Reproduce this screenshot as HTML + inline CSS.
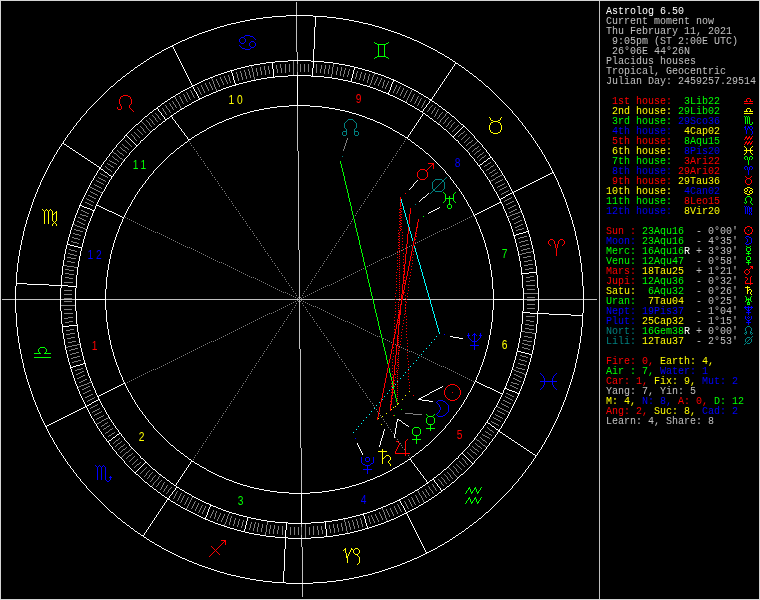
<!DOCTYPE html>
<html><head><meta charset="utf-8"><title>Astrolog 6.50</title>
<style>
html,body{margin:0;padding:0;background:#000;}
body{width:760px;height:600px;position:relative;overflow:hidden;}
#chart{position:absolute;left:0;top:0;will-change:transform;}
#chart path{fill:none;stroke-width:1;shape-rendering:crispEdges;}
#chart text{font-family:"Liberation Sans",sans-serif;font-size:12.5px;text-anchor:middle;letter-spacing:3.4px;}
#side{will-change:transform;position:absolute;left:606px;top:7px;font-family:"Liberation Mono",monospace;font-size:10px;line-height:10px;color:#c0c0c0;}
#side .l{height:10px;white-space:pre;}
#frame{position:absolute;left:0;top:0;width:758px;height:598px;border:1px solid #d4d4d4;pointer-events:none;}
</style></head><body>
<svg id="chart" width="760" height="600" viewBox="0 0 760 600">
<path stroke="#ffffff" d="M286 15.5h27M272 16.5h14M313 16.5h14M263 17.5h9M315.5 17v10M327 17.5h9M256 18.5h7M336 18.5h7M250 19.5h6M343 19.5h6M245 20.5h5M349 20.5h5M240 21.5h5M354 21.5h5M236 22.5h4M359 22.5h4M231 23.5h5M363 23.5h5M227 24.5h4M368 24.5h4M224 25.5h3M372 25.5h3M220 26.5h4M375 26.5h4M217 27.5h3M314.5 27v22M379 27.5h3M214 28.5h3M382 28.5h3M211 29.5h3M385 29.5h3M208 30.5h3M388 30.5h3M205 31.5h3M391 31.5h3M202 32.5h3M394 32.5h3M199 33.5h3M397 33.5h3M197 34.5h2M400 34.5h2M194 35.5h3M402 35.5h3M192 36.5h2M405 36.5h2M189 37.5h3M407 37.5h3M187 38.5h2M410 38.5h2M185 39.5h2M412 39.5h2M182 40.5h3M414 40.5h3M180 41.5h2M417 41.5h2M178 42.5h2M419 42.5h2M176 43.5h2M421 43.5h2M174 44.5h2M423 44.5h2M172 45.5h2M425 45.5h2M170 46.5h3M427 46.5h2M168 47.5h2M173.5 47v2M429 47.5h2M166 48.5h2M431 48.5h2M164 49.5h2M174.5 49v2M313.5 49v19M433 49.5h2M162 50.5h2M435 50.5h2M161 51.5h1M175.5 51v2M437 51.5h1M159 52.5h2M438 52.5h2M157 53.5h2M176.5 53v2M440 53.5h2M155 54.5h2M442 54.5h2M154 55.5h1M177.5 55v2M444 55.5h1M152 56.5h2M445 56.5h2M150 57.5h2M178.5 57v2M447 57.5h2M149 58.5h1M449 58.5h1M147 59.5h2M179.5 59v2M450 59.5h2M146 60.5h1M288 60.5h23M452 60.5h1M144 61.5h2M180.5 61v2M275 61.5h13M311 61.5h2M314 61.5h10M453 61.5h2M143 62.5h1M266 62.5h9M324 62.5h9M455.5 62v2M141 63.5h2M181.5 63v2M260 63.5h6M272.5 63v6M333 63.5h6M456 63.5h2M140 64.5h1M254 64.5h6M339 64.5h6M454.5 64v2M458 64.5h1M138 65.5h2M182.5 65v2M249 65.5h5M345 65.5h5M459 65.5h2M137 66.5h1M245 66.5h4M350 66.5h4M453 66.5h1M461 66.5h1M135 67.5h2M183.5 67v2M241 67.5h4M354 67.5h4M452.5 67v2M462 67.5h2M134 68.5h1M237 68.5h4M312.5 68v9M354.5 68v2M358 68.5h4M464 68.5h1M133 69.5h1M184.5 69v2M234 69.5h3M273.5 69v9M362 69.5h3M451 69.5h1M465 69.5h1M131 70.5h2M230 70.5h4M353.5 70v4M365 70.5h4M450.5 70v2M466 70.5h2M130 71.5h1M185.5 71v2M227 71.5h3M231.5 71v2M369 71.5h3M468 71.5h1M129 72.5h1M224 72.5h3M372 72.5h3M449 72.5h1M469 72.5h1M127 73.5h2M186.5 73v2M221 73.5h3M232.5 73v3M375 73.5h3M448.5 73v2M470 73.5h2M126 74.5h1M218 74.5h3M352.5 74v4M378 74.5h3M472 74.5h1M125 75.5h1M187.5 75v2M215 75.5h3M288 75.5h23M381 75.5h3M447 75.5h1M473 75.5h1M123 76.5h2M213 76.5h2M233.5 76v4M275 76.5h13M297.5 76v30M311 76.5h1M313 76.5h11M384 76.5h2M446.5 76v2M474 76.5h2M122 77.5h1M188.5 77v2M210 77.5h3M267 77.5h6M274 77.5h1M324 77.5h8M386 77.5h3M476 77.5h1M121 78.5h1M208 78.5h2M261 78.5h6M332 78.5h6M351.5 78v4M389 78.5h2M445 78.5h1M477 78.5h1M120 79.5h1M189.5 79v2M205 79.5h3M256 79.5h5M338 79.5h5M391 79.5h3M444.5 79v2M478 79.5h1M118 80.5h2M203 80.5h2M234.5 80v3M251 80.5h5M343 80.5h5M393 80.5h3M479 80.5h2M117 81.5h1M190.5 81v2M201 81.5h2M247 81.5h4M348 81.5h3M393 81.5h1M396 81.5h2M443 81.5h1M481 81.5h1M116 82.5h1M199 82.5h2M243 82.5h4M352 82.5h4M392.5 82v2M398 82.5h2M442.5 82v2M482 82.5h1M115 83.5h1M191.5 83v2M197 83.5h2M235.5 83v3M239 83.5h4M356 83.5h4M400 83.5h2M483 83.5h1M114 84.5h1M195 84.5h2M236 84.5h3M360 84.5h3M391.5 84v3M402 84.5h2M441 84.5h1M484 84.5h1M113 85.5h1M192 85.5h3M232 85.5h3M363 85.5h4M404 85.5h2M440.5 85v2M485 85.5h1M111 86.5h2M191 86.5h2M229 86.5h3M367 86.5h3M406 86.5h2M486 86.5h2M110 87.5h1M189 87.5h2M193.5 87v2M226 87.5h3M370 87.5h3M390.5 87v3M408 87.5h2M439 87.5h1M488 87.5h1M109 88.5h1M187 88.5h2M223 88.5h3M373 88.5h3M410 88.5h2M438.5 88v2M489 88.5h1M108 89.5h1M185 89.5h2M194.5 89v2M221 89.5h2M376 89.5h2M412 89.5h2M490 89.5h1M107 90.5h1M183 90.5h2M218 90.5h3M378 90.5h3M389.5 90v2M414 90.5h2M437 90.5h1M491 90.5h1M106 91.5h1M181 91.5h2M195 91.5h1M216 91.5h2M381 91.5h2M416 91.5h2M436.5 91v2M492 91.5h1M105 92.5h1M180 92.5h1M196.5 92v2M213 92.5h3M383 92.5h3M388.5 92v3M418 92.5h1M493 92.5h1M104 93.5h1M178 93.5h2M211 93.5h2M386 93.5h2M419 93.5h2M435 93.5h1M494 93.5h1M103 94.5h1M176 94.5h2M197.5 94v2M209 94.5h2M389 94.5h1M421 94.5h2M434.5 94v2M495 94.5h1M102 95.5h1M175 95.5h1M206 95.5h3M390 95.5h3M423 95.5h1M496 95.5h1M101 96.5h1M173 96.5h2M198.5 96v2M204 96.5h2M393 96.5h2M424 96.5h2M433 96.5h1M497 96.5h1M100 97.5h1M171 97.5h2M202 97.5h2M395 97.5h2M426 97.5h2M432.5 97v2M498 97.5h1M99 98.5h1M170 98.5h1M199 98.5h3M397 98.5h2M428 98.5h1M499 98.5h1M98 99.5h1M168 99.5h2M198 99.5h2M399 99.5h2M429 99.5h3M500 99.5h1M97 100.5h1M167 100.5h1M196 100.5h2M401 100.5h2M430 100.5h2M501 100.5h1M96 101.5h1M165 101.5h2M194 101.5h2M403 101.5h2M429.5 101v2M432 101.5h2M502 101.5h1M95 102.5h1M164 102.5h1M192 102.5h2M405 102.5h2M434 102.5h1M503 102.5h1M94 103.5h1M162 103.5h2M191 103.5h1M407 103.5h1M428 103.5h1M435 103.5h2M504 103.5h1M93 104.5h1M161 104.5h1M189 104.5h2M408 104.5h2M427 104.5h1M437 104.5h1M505 104.5h1M92 105.5h1M160 105.5h1M187 105.5h2M289 105.5h8M298 105.5h12M410 105.5h2M426.5 105v2M438 105.5h1M506 105.5h1M91 106.5h1M158 106.5h2M185 106.5h2M277 106.5h12M310 106.5h12M412 106.5h2M439 106.5h2M507 106.5h1M90 107.5h1M157.5 107v2M184 107.5h1M270 107.5h7M322 107.5h7M414 107.5h1M425 107.5h1M441 107.5h1M508 107.5h1M89 108.5h1M156 108.5h1M182 108.5h2M264 108.5h6M329 108.5h6M415 108.5h2M424 108.5h1M442 108.5h1M509 108.5h1M88 109.5h1M154 109.5h2M158.5 109v2M180 109.5h2M259 109.5h5M335 109.5h5M417 109.5h2M423.5 109v2M443 109.5h2M510 109.5h1M87 110.5h1M153 110.5h1M179 110.5h1M254 110.5h5M340 110.5h5M419 110.5h1M445 110.5h1M511 110.5h1M86.5 111v2M152 111.5h1M159 111.5h1M177 111.5h2M250 111.5h4M345 111.5h4M420 111.5h3M446 111.5h1M512.5 111v2M150 112.5h2M160 112.5h1M176 112.5h1M247 112.5h3M349 112.5h3M422 112.5h1M447 112.5h2M85 113.5h1M149 113.5h1M161.5 113v2M174 113.5h2M243 113.5h4M352 113.5h4M423 113.5h2M449 113.5h1M513 113.5h1M84 114.5h1M148 114.5h1M173 114.5h1M240 114.5h3M356 114.5h3M422.5 114v2M425 114.5h1M450 114.5h1M514 114.5h1M83 115.5h1M147 115.5h1M162 115.5h1M171 115.5h2M237 115.5h3M359 115.5h3M426 115.5h2M451 115.5h1M515 115.5h1M82 116.5h1M145 116.5h2M163 116.5h1M170 116.5h2M234 116.5h3M362 116.5h3M421 116.5h1M428 116.5h1M452 116.5h2M516 116.5h1M81 117.5h1M144 117.5h1M164.5 117v2M169 117.5h1M172.5 117v2M232 117.5h2M365 117.5h2M420.5 117v2M429 117.5h1M454 117.5h1M517 117.5h1M80.5 118v2M143 118.5h1M167 118.5h2M229 118.5h3M367 118.5h3M430 118.5h2M455 118.5h1M518.5 118v2M142 119.5h1M165 119.5h2M173 119.5h1M226 119.5h3M370 119.5h3M419 119.5h1M432 119.5h1M456 119.5h1M79 120.5h1M141 120.5h1M165 120.5h1M174 120.5h1M224 120.5h2M373 120.5h2M418.5 120v2M433 120.5h1M457 120.5h1M519 120.5h1M78 121.5h1M140 121.5h1M163 121.5h2M175.5 121v2M222 121.5h2M375 121.5h2M434 121.5h2M458 121.5h1M520 121.5h1M77 122.5h1M139 122.5h1M162 122.5h1M219 122.5h3M377 122.5h3M417 122.5h1M436 122.5h1M459 122.5h1M521 122.5h1M76.5 123v2M138 123.5h1M161 123.5h1M176 123.5h1M217 123.5h2M380 123.5h2M416.5 123v2M437 123.5h1M460 123.5h1M522.5 123v2M136 124.5h2M159 124.5h2M177 124.5h1M215 124.5h2M382 124.5h2M438 124.5h2M461 124.5h2M75 125.5h1M135 125.5h1M158 125.5h1M178.5 125v2M213 125.5h2M384 125.5h2M415 125.5h1M440 125.5h1M463.5 125v2M523 125.5h1M74 126.5h1M134 126.5h1M157 126.5h1M211 126.5h2M386 126.5h2M414.5 126v2M441 126.5h1M464 126.5h1M524 126.5h1M73.5 127v2M133 127.5h1M156 127.5h1M179 127.5h1M209 127.5h2M388 127.5h2M442 127.5h1M462 127.5h1M465 127.5h1M525.5 127v2M132 128.5h1M155 128.5h1M180 128.5h1M207 128.5h2M390 128.5h2M413 128.5h1M443 128.5h1M461 128.5h1M466 128.5h1M72 129.5h1M131 129.5h1M153 129.5h2M181.5 129v2M206 129.5h1M392 129.5h1M412.5 129v2M444 129.5h2M460 129.5h1M467 129.5h1M526 129.5h1M71 130.5h1M130 130.5h1M152 130.5h1M204 130.5h2M393 130.5h2M446 130.5h1M459 130.5h1M468 130.5h1M527 130.5h1M70.5 131v2M129 131.5h1M151 131.5h1M182 131.5h1M202 131.5h2M395 131.5h2M411 131.5h1M447 131.5h1M458 131.5h1M469 131.5h1M528.5 131v2M128 132.5h1M150 132.5h1M183 132.5h1M200 132.5h2M397 132.5h2M410.5 132v2M448 132.5h1M457 132.5h1M470 132.5h1M69 133.5h1M127 133.5h1M149 133.5h1M184.5 133v2M199 133.5h1M399 133.5h1M449 133.5h1M456 133.5h1M471 133.5h1M529 133.5h1M68 134.5h1M126.5 134v2M148 134.5h1M197 134.5h2M400 134.5h2M409 134.5h1M450 134.5h1M455 134.5h1M472 134.5h1M530 134.5h1M67.5 135v2M125 135.5h1M147 135.5h1M185 135.5h1M195 135.5h2M402 135.5h2M408.5 135v2M451 135.5h1M454 135.5h1M473 135.5h1M531.5 135v2M124.5 136v2M127 136.5h1M146 136.5h1M186 136.5h1M194 136.5h1M404 136.5h1M452 136.5h2M474.5 136v2M66 137.5h1M128 137.5h1M145 137.5h1M187.5 137v2M192 137.5h2M405 137.5h3M453 137.5h1M532 137.5h1M65.5 138v2M123 138.5h1M129 138.5h1M144 138.5h1M191 138.5h1M407 138.5h1M454 138.5h1M475 138.5h1M533.5 138v2M122 139.5h1M130 139.5h1M143 139.5h1M188 139.5h3M408 139.5h2M455 139.5h1M476 139.5h1M64 140.5h1M121 140.5h1M131 140.5h1M141 140.5h2M188 140.5h1M410 140.5h1M456 140.5h2M477 140.5h1M534 140.5h1M63.5 141v3M120 141.5h1M132 141.5h1M140.5 141v2M187 141.5h1M411 141.5h1M458.5 141v2M478 141.5h1M535.5 141v2M119 142.5h1M133 142.5h1M185 142.5h2M412 142.5h2M479 142.5h1M62 143.5h1M118 143.5h1M134 143.5h1M139 143.5h1M184 143.5h1M414 143.5h1M459 143.5h1M480 143.5h1M536 143.5h1M61.5 144v2M64 144.5h2M117 144.5h1M135 144.5h1M138 144.5h1M183 144.5h1M415 144.5h1M460 144.5h1M481 144.5h1M537.5 144v2M66 145.5h1M116.5 145v2M136 145.5h2M181 145.5h2M416 145.5h2M461 145.5h1M482.5 145v2M60 146.5h1M67 146.5h2M136 146.5h1M180 146.5h1M418 146.5h1M462 146.5h1M538 146.5h1M59.5 147v2M69 147.5h1M115 147.5h1M135 147.5h1M179 147.5h1M419 147.5h1M463 147.5h1M483 147.5h1M539.5 147v2M70 148.5h2M114 148.5h1M134 148.5h1M177 148.5h2M420 148.5h2M464 148.5h1M484 148.5h1M58 149.5h1M72 149.5h1M113 149.5h1M133 149.5h1M176 149.5h1M422 149.5h1M465 149.5h1M485 149.5h1M540 149.5h1M57.5 150v2M73 150.5h2M112.5 150v2M132 150.5h1M175 150.5h1M423 150.5h1M466 150.5h1M486.5 150v2M541.5 150v2M75 151.5h1M131 151.5h1M174 151.5h1M424 151.5h1M467 151.5h1M56.5 152v2M76 152.5h2M111 152.5h1M130 152.5h1M173 152.5h1M425 152.5h1M468 152.5h1M487 152.5h1M542.5 152v2M78 153.5h1M110 153.5h1M129.5 153v2M171 153.5h2M426 153.5h2M469.5 153v2M488 153.5h1M55 154.5h1M79 154.5h2M109.5 154v2M170 154.5h1M428 154.5h1M489.5 154v2M543 154.5h1M54.5 155v2M81 155.5h1M128 155.5h1M169 155.5h1M429 155.5h1M470 155.5h1M544.5 155v2M82 156.5h2M108 156.5h1M127 156.5h1M168 156.5h1M430 156.5h1M471 156.5h1M490.5 156v2M53.5 157v2M84 157.5h1M107 157.5h1M126 157.5h1M167 157.5h1M431 157.5h1M472 157.5h1M491 157.5h1M545.5 157v2M85 158.5h2M106.5 158v2M125 158.5h1M166 158.5h1M432 158.5h1M473 158.5h1M488 158.5h2M492.5 158v2M52.5 159v2M87 159.5h1M124.5 159v2M165 159.5h1M433 159.5h1M474.5 159v2M487 159.5h1M546.5 159v2M88 160.5h2M105 160.5h1M164 160.5h1M434 160.5h1M486 160.5h1M493 160.5h1M51 161.5h1M90 161.5h1M104 161.5h1M123 161.5h1M163 161.5h1M435 161.5h1M475 161.5h1M484 161.5h2M494 161.5h1M547 161.5h1M50.5 162v2M91 162.5h2M103.5 162v2M122 162.5h1M162 162.5h1M436 162.5h1M476 162.5h1M483 162.5h1M495.5 162v2M548.5 162v2M93 163.5h1M121.5 163v2M161 163.5h1M437 163.5h1M477.5 163v2M482 163.5h1M49.5 164v2M94 164.5h2M102 164.5h1M160 164.5h1M438 164.5h1M480 164.5h2M496 164.5h1M549.5 164v2M96 165.5h1M101.5 165v2M120 165.5h1M159 165.5h1M439 165.5h1M478 165.5h2M497.5 165v2M48.5 166v2M97 166.5h2M119 166.5h1M158 166.5h1M440 166.5h1M479 166.5h1M550.5 166v2M99.5 167v3M100.5 167v2M118.5 167v2M157 167.5h1M441 167.5h1M480.5 167v2M498 167.5h1M47.5 168v2M156 168.5h1M442 168.5h1M499.5 168v2M551.5 168v2M101 169.5h2M117 169.5h1M155 169.5h1M443 169.5h1M481 169.5h1M46.5 170v2M98 170.5h1M103 170.5h1M116 170.5h1M154 170.5h1M444 170.5h1M482 170.5h1M500 170.5h1M552.5 170v3M97.5 171v2M104 171.5h1M115.5 171v2M153.5 171v2M445.5 171v2M483.5 171v2M501.5 171v2M45.5 172v2M105 172.5h2M553.5 172v2M96.5 173v2M107 173.5h1M114 173.5h1M152 173.5h1M446 173.5h1M484 173.5h1M502.5 173v2M550 173.5h2M44.5 174v2M108 174.5h1M113.5 174v2M151 174.5h1M447 174.5h1M485.5 174v2M548 174.5h2M554.5 174v2M95 175.5h1M109 175.5h2M150 175.5h1M448 175.5h1M503 175.5h1M546 175.5h2M43.5 176v2M94.5 176v2M111.5 176v3M112 176.5h1M149 176.5h1M449 176.5h1M486 176.5h1M504.5 176v2M544 176.5h2M555.5 176v2M148.5 177v2M450.5 177v2M487.5 177v2M542 177.5h2M42.5 178v2M93.5 178v2M505.5 178v2M540 178.5h2M556.5 178v2M110 179.5h1M147 179.5h1M451 179.5h1M488 179.5h1M538 179.5h2M41.5 180v2M92 180.5h1M109.5 180v2M146 180.5h1M417 180.5h1M452 180.5h1M489.5 180v2M506 180.5h1M536 180.5h2M557.5 180v2M91.5 181v2M145.5 181v2M416 181.5h1M453.5 181v2M507.5 181v2M534 181.5h2M40.5 182v3M108.5 182v2M415 182.5h1M490.5 182v2M532 182.5h2M558.5 182v3M90.5 183v2M144 183.5h1M414 183.5h1M454 183.5h1M508.5 183v2M530 183.5h2M107 184.5h1M143 184.5h1M413.5 184v2M455 184.5h1M491 184.5h1M528 184.5h2M39.5 185v2M89.5 185v2M106.5 185v2M142.5 185v2M456.5 185v2M492.5 185v2M509.5 185v2M526 185.5h2M559.5 185v2M412 186.5h1M524 186.5h2M38.5 187v2M88.5 187v2M105.5 187v2M141 187.5h1M411 187.5h1M457 187.5h1M493.5 187v2M510.5 187v2M522 187.5h2M560.5 187v2M140 188.5h1M410 188.5h1M458 188.5h1M520 188.5h2M37.5 189v3M87.5 189v2M104.5 189v2M139.5 189v2M409 189.5h1M459.5 189v2M494.5 189v2M511.5 189v2M518 189.5h2M561.5 189v3M516 190.5h2M86.5 191v2M103 191.5h1M138 191.5h1M460 191.5h1M495 191.5h1M512.5 191v2M514 191.5h2M36.5 192v2M102.5 192v2M137.5 192v2M461.5 192v2M496.5 192v2M513.5 192v3M562.5 192v2M85.5 193v2M428 193.5h1M510 193.5h2M35.5 194v3M101.5 194v2M136 194.5h1M427 194.5h1M462 194.5h1M497.5 194v2M508 194.5h2M563.5 194v3M84.5 195v2M135.5 195v2M426 195.5h1M463.5 195v2M506 195.5h2M514.5 195v2M100.5 196v2M425 196.5h1M498.5 196v2M505 196.5h1M34.5 197v2M83.5 197v2M134.5 197v2M423 197.5h2M464.5 197v2M503 197.5h2M515.5 197v2M564.5 197v2M99.5 198v2M422 198.5h1M499.5 198v2M501 198.5h2M33.5 199v3M82.5 199v2M133 199.5h1M421 199.5h1M465 199.5h1M500.5 199v4M516.5 199v2M565.5 199v3M98.5 200v2M132.5 200v2M420 200.5h1M466.5 200v2M81.5 201v2M419 201.5h1M517.5 201v2M32.5 202v3M97.5 202v2M131.5 202v2M467.5 202v2M499 202.5h1M501.5 202v2M566.5 202v3M80.5 203v3M497 203.5h2M518.5 203v2M96.5 204v2M130.5 204v2M468.5 204v2M495 204.5h2M502.5 204v2M31.5 205v3M79.5 205v3M81 205.5h1M97 205.5h2M493 205.5h2M519.5 205v3M567.5 205v3M82 206.5h2M95.5 206v3M99 206.5h2M129 206.5h1M469 206.5h1M491 206.5h2M503.5 206v3M84 207.5h3M101 207.5h2M128.5 207v2M439 207.5h1M470.5 207v2M489 207.5h2M30.5 208v3M78.5 208v2M87 208.5h3M103 208.5h2M437 208.5h2M487 208.5h2M520.5 208v2M568.5 208v3M90 209.5h2M94.5 209v2M105 209.5h2M127.5 209v2M435 209.5h2M471.5 209v2M485 209.5h2M504.5 209v2M77.5 210v3M92 210.5h2M107 210.5h2M433 210.5h2M483 210.5h2M521.5 210v3M29.5 211v3M93.5 211v2M109 211.5h3M126.5 211v2M431 211.5h2M472.5 211v2M481 211.5h2M505.5 211v2M569.5 211v3M112 212.5h2M429 212.5h2M479 212.5h2M76.5 213v2M92.5 213v3M114 213.5h2M125.5 213v2M428 213.5h1M473.5 213v2M477 213.5h2M506.5 213v3M522.5 213v2M28.5 214v3M116 214.5h2M475 214.5h2M570.5 214v3M75.5 215v3M118 215.5h2M124.5 215v2M474.5 215v2M523.5 215v3M91.5 216v2M120 216.5h2M507.5 216v2M27.5 217v3M122 217.5h2M475.5 217v2M571.5 217v3M74.5 218v3M90.5 218v3M123 218.5h1M508.5 218v3M524.5 218v3M122.5 219v3M476.5 219v3M26.5 220v4M572.5 220v4M73.5 221v3M89.5 221v2M509.5 221v2M525.5 221v3M121.5 222v2M477.5 222v2M88.5 223v3M510.5 223v3M25.5 224v3M72.5 224v3M120.5 224v2M478.5 224v2M526.5 224v3M573.5 224v3M87.5 226v3M119.5 226v3M479.5 226v3M511.5 226v3M24.5 227v4M71.5 227v3M527.5 227v3M574.5 227v4M86.5 229v3M118.5 229v3M480.5 229v3M512.5 229v3M70.5 230v4M528.5 230v4M23.5 231v5M526 231.5h2M575.5 231v5M85.5 232v4M117.5 232v2M481.5 232v2M513.5 232v4M523 232.5h3M519 233.5h4M69.5 234v3M116.5 234v3M482.5 234v3M516 234.5h3M529.5 234v3M514.5 235v4M515 235.5h1M22.5 236v4M84.5 236v3M576.5 236v4M68.5 237v4M115.5 237v3M483.5 237v3M530.5 237v4M83.5 239v4M515.5 239v4M21.5 240v5M114.5 240v3M484.5 240v3M577.5 240v5M67.5 241v4M531.5 241v4M82.5 243v4M113.5 243v4M485.5 243v4M516.5 243v4M68 244.5h2M20.5 245v5M66.5 245v4M70 245.5h4M532.5 245v4M578.5 245v5M74 246.5h4M78 247.5h4M112.5 247v3M486.5 247v3M517.5 247v4M81.5 248v3M65.5 249v5M533.5 249v5M19.5 250v6M111.5 250v4M487.5 250v4M579.5 250v6M80.5 251v5M518.5 251v5M64.5 254v6M110.5 254v5M488.5 254v5M534.5 254v6M18.5 256v7M79.5 256v5M519.5 256v5M580.5 256v7M109.5 259v5M489.5 259v5M63.5 260v6M535.5 260v6M78.5 261v6M520.5 261v6M17.5 263v9M581.5 263v9M108.5 264v6M490.5 264v6M62.5 266v9M536.5 266v9M77.5 267v8M521.5 267v8M107.5 270v7M491.5 270v7M16.5 272v14M529 272.5h7M582.5 272v14M522 273.5h7M61.5 275v13M76.5 275v13M522.5 275v13M537.5 275v13M106.5 277v12M492.5 277v12M17 283.5h10M27 284.5h22M49 285.5h12M62 285.5h6M15.5 286v27M68 286.5h8M583.5 286v27M60.5 288v23M75.5 288v23M523.5 288v23M538.5 288v23M105.5 289v21M493.5 289v21M76 299.5h29M494 299.5h29M106.5 310v12M492.5 310v12M61.5 311v13M76.5 311v13M522.5 311v13M537.5 311v13M523 312.5h7M16.5 313v14M530 313.5h7M538 313.5h11M582.5 313v14M549 314.5h22M571 315.5h11M107.5 322v7M491.5 322v7M62.5 324v9M77.5 324v8M521.5 324v8M536.5 324v9M69 325.5h8M63 326.5h6M17.5 327v9M581.5 327v9M108.5 329v6M490.5 329v6M78.5 332v6M520.5 332v6M63.5 333v6M535.5 333v6M109.5 335v5M489.5 335v5M18.5 336v7M450 336.5h3M580.5 336v7M453 337.5h6M79.5 338v5M459 338.5h4M519.5 338v5M64.5 339v6M534.5 339v6M110.5 340v5M488.5 340v5M19.5 343v6M80.5 343v5M518.5 343v5M579.5 343v6M65.5 345v5M111.5 345v4M487.5 345v4M533.5 345v5M81.5 348v4M517.5 348v4M20.5 349v5M112.5 349v3M486.5 349v3M578.5 349v5M66.5 350v4M532.5 350v4M518 351.5h3M82.5 352v4M113.5 352v4M485.5 352v4M516.5 352v4M521 352.5h4M525 353.5h4M21.5 354v5M67.5 354v4M529 354.5h3M577.5 354v5M531.5 355v3M83.5 356v4M114.5 356v3M484.5 356v3M515.5 356v4M68.5 358v4M530.5 358v4M22.5 359v4M115.5 359v3M483.5 359v3M576.5 359v4M84.5 360v4M514.5 360v3M69.5 362v3M116.5 362v3M482.5 362v3M529.5 362v3M23.5 363v5M83 363.5h1M85.5 363v4M513.5 363v4M575.5 363v5M80 364.5h3M70.5 365v4M76 365.5h4M117.5 365v2M481.5 365v2M528.5 365v4M73 366.5h3M71 367.5h2M86.5 367v3M118.5 367v3M480.5 367v3M512.5 367v3M24.5 368v4M574.5 368v4M71.5 369v3M527.5 369v3M87.5 370v3M119.5 370v3M479.5 370v3M511.5 370v3M25.5 372v3M72.5 372v3M526.5 372v3M573.5 372v3M88.5 373v3M120.5 373v2M478.5 373v2M510.5 373v3M26.5 375v4M73.5 375v3M121.5 375v2M477.5 375v2M525.5 375v3M572.5 375v4M89.5 376v2M509.5 376v2M122.5 377v3M476.5 377v3M74.5 378v3M90.5 378v3M508.5 378v3M524.5 378v3M27.5 379v3M571.5 379v3M123.5 380v2M475.5 380v2M75.5 381v3M91.5 381v2M476 381.5h1M507.5 381v2M523.5 381v3M28.5 382v3M124.5 382v2M474.5 382v2M477 382.5h2M570.5 382v3M92.5 383v3M123 383.5h1M479 383.5h2M506.5 383v3M76.5 384v2M121 384.5h2M125.5 384v2M473.5 384v2M481 384.5h2M522.5 384v2M29.5 385v3M119 385.5h2M483 385.5h2M569.5 385v3M77.5 386v3M93.5 386v2M117 386.5h2M126.5 386v2M442 386.5h1M472.5 386v2M485 386.5h2M505.5 386v3M521.5 386v3M115 387.5h2M440 387.5h2M487 387.5h3M30.5 388v3M94.5 388v2M113 388.5h2M127.5 388v2M438 388.5h2M471.5 388v2M490 388.5h2M504.5 388v2M506 388.5h1M568.5 388v3M78.5 389v2M111 389.5h2M436 389.5h2M492 389.5h2M507 389.5h2M520.5 389v2M95.5 390v3M109 390.5h2M128.5 390v2M434 390.5h2M470.5 390v2M494 390.5h2M503.5 390v3M509 390.5h3M31.5 391v3M79.5 391v3M107 391.5h2M432 391.5h2M496 391.5h2M512 391.5h3M519.5 391v3M567.5 391v3M105 392.5h2M129 392.5h1M430 392.5h2M469 392.5h1M498 392.5h2M515 392.5h2M96.5 393v2M103 393.5h2M130.5 393v2M429 393.5h1M468.5 393v2M500 393.5h3M517 393.5h2M32.5 394v3M80.5 394v2M101 394.5h2M427 394.5h2M502 394.5h1M518.5 394v2M566.5 394v3M97.5 395v2M99 395.5h2M131.5 395v2M425 395.5h2M467.5 395v2M501.5 395v2M81.5 396v2M98.5 396v4M423 396.5h2M517.5 396v2M33.5 397v3M132.5 397v2M421 397.5h2M466.5 397v2M500.5 397v2M565.5 397v3M82.5 398v2M419 398.5h2M516.5 398v2M99.5 399v2M133 399.5h1M418 399.5h4M465 399.5h1M499.5 399v2M34.5 400v2M83.5 400v2M96 400.5h2M134.5 400v2M422 400.5h7M464.5 400v2M515.5 400v2M564.5 400v2M94 401.5h2M100.5 401v2M429 401.5h4M498.5 401v2M35.5 402v3M84.5 402v2M92 402.5h2M135.5 402v2M463.5 402v2M514.5 402v2M563.5 402v3M91 403.5h1M101.5 403v2M497.5 403v2M85.5 404v3M89 404.5h2M136 404.5h1M462 404.5h1M513.5 404v2M36.5 405v2M87 405.5h2M102.5 405v2M137.5 405v2M461.5 405v2M496.5 405v2M562.5 405v2M86.5 406v2M512.5 406v2M37.5 407v3M83 407.5h2M103 407.5h1M138 407.5h1M460 407.5h1M495 407.5h1M561.5 407v3M81 408.5h2M87.5 408v2M104.5 408v2M139.5 408v2M459.5 408v2M494.5 408v2M511.5 408v2M79 409.5h2M38.5 410v2M77 410.5h2M88.5 410v2M105.5 410v2M140 410.5h1M458 410.5h1M493.5 410v2M510.5 410v2M560.5 410v2M75 411.5h2M141 411.5h1M457 411.5h1M39.5 412v2M73 412.5h2M89.5 412v2M106.5 412v2M142.5 412v2M456.5 412v2M492.5 412v2M509.5 412v2M559.5 412v2M71 413.5h2M40.5 414v3M69 414.5h2M90.5 414v2M107 414.5h1M143 414.5h1M455 414.5h1M491 414.5h1M508.5 414v2M558.5 414v3M67 415.5h2M108.5 415v2M144 415.5h1M454 415.5h1M490.5 415v2M65 416.5h2M91.5 416v2M145.5 416v2M453.5 416v2M507.5 416v2M41.5 417v2M63 417.5h2M109.5 417v2M489.5 417v2M557.5 417v2M61 418.5h2M92 418.5h1M146 418.5h1M452 418.5h1M506 418.5h1M42.5 419v2M59 419.5h2M93.5 419v2M110 419.5h1M147 419.5h1M397.5 419v3M398 419.5h1M451 419.5h1M488 419.5h1M505.5 419v2M556.5 419v2M57 420.5h2M111.5 420v2M148.5 420v2M399 420.5h2M450.5 420v2M487.5 420v3M43.5 421v2M55 421.5h2M94.5 421v2M401 421.5h1M504.5 421v2M555.5 421v2M53 422.5h2M112 422.5h1M149 422.5h1M396.5 422v6M402 422.5h1M449 422.5h1M486 422.5h1M44.5 423v2M51 423.5h2M95 423.5h1M113.5 423v2M150 423.5h1M403 423.5h2M448 423.5h1M485.5 423v2M488 423.5h2M503 423.5h1M554.5 423v2M49 424.5h2M96.5 424v2M151 424.5h1M405 424.5h1M447 424.5h1M490 424.5h1M502.5 424v2M45.5 425v2M47 425.5h2M114 425.5h1M152 425.5h1M406 425.5h2M446 425.5h1M484 425.5h1M491 425.5h1M553.5 425v2M46.5 426v3M97.5 426v2M115.5 426v2M153.5 426v2M408 426.5h1M445.5 426v2M483.5 426v2M492 426.5h2M501.5 426v2M494 427.5h1M552.5 427v2M98 428.5h1M116 428.5h1M154 428.5h1M395.5 428v6M444 428.5h1M482 428.5h1M495 428.5h1M500 428.5h1M47.5 429v2M99.5 429v2M117 429.5h1M155 429.5h1M384.5 429v2M443 429.5h1M481 429.5h1M496 429.5h2M499.5 429v3M551.5 429v2M118.5 430v2M156 430.5h1M442 430.5h1M480.5 430v2M498.5 430v2M48.5 431v2M100 431.5h1M157 431.5h1M383.5 431v4M441 431.5h1M550.5 431v2M101.5 432v2M119.5 432v2M158 432.5h1M440 432.5h1M479 432.5h1M497.5 432v2M500 432.5h2M49.5 433v2M120 433.5h1M159 433.5h1M439 433.5h1M478 433.5h1M502 433.5h1M549.5 433v2M102 434.5h1M117 434.5h2M121.5 434v2M160 434.5h1M394.5 434v4M438 434.5h1M477.5 434v2M496 434.5h1M503 434.5h2M50.5 435v2M103.5 435v2M116 435.5h1M161 435.5h1M382.5 435v3M437 435.5h1M495.5 435v2M505 435.5h1M548.5 435v2M115 436.5h1M122 436.5h1M162 436.5h1M436 436.5h1M476 436.5h1M506 436.5h2M51 437.5h1M104 437.5h1M113 437.5h2M123 437.5h1M163 437.5h1M435 437.5h1M475 437.5h1M494 437.5h1M508 437.5h1M547 437.5h1M52.5 438v2M105 438.5h1M112 438.5h1M124.5 438v2M164 438.5h1M381.5 438v3M434 438.5h1M474.5 438v2M493 438.5h1M509 438.5h2M546.5 438v2M106.5 439v2M111 439.5h1M165 439.5h1M433 439.5h1M492.5 439v2M511 439.5h1M53.5 440v2M109 440.5h2M125 440.5h1M166 440.5h1M432 440.5h1M473 440.5h1M512 440.5h2M545.5 440v2M107 441.5h2M126 441.5h1M167 441.5h1M380.5 441v4M431 441.5h1M472 441.5h1M491 441.5h1M514 441.5h1M54.5 442v2M108 442.5h1M127 442.5h1M168 442.5h1M430 442.5h1M471 442.5h1M490 442.5h1M515 442.5h2M544.5 442v2M109.5 443v2M128 443.5h1M169 443.5h1M357.5 443v2M429 443.5h1M470 443.5h1M489.5 443v2M517 443.5h1M55 444.5h1M129.5 444v2M170 444.5h1M428 444.5h1M469.5 444v2M518 444.5h2M543 444.5h1M56.5 445v2M110 445.5h1M171 445.5h2M358.5 445v2M379.5 445v2M426 445.5h2M488 445.5h1M520 445.5h1M542.5 445v2M111 446.5h1M130 446.5h1M173 446.5h1M425 446.5h1M468 446.5h1M487 446.5h1M521 446.5h2M57.5 447v2M112.5 447v2M131 447.5h1M174 447.5h1M359.5 447v2M424 447.5h1M467 447.5h1M486.5 447v2M523 447.5h1M541.5 447v2M132 448.5h1M175 448.5h1M423 448.5h1M466 448.5h1M524 448.5h2M58 449.5h1M113 449.5h1M133 449.5h1M176 449.5h1M360.5 449v2M422 449.5h1M465 449.5h1M485 449.5h1M526 449.5h1M540 449.5h1M59.5 450v2M114 450.5h1M134 450.5h1M177 450.5h2M420 450.5h2M464 450.5h1M484 450.5h1M527 450.5h2M539.5 450v2M115 451.5h1M135 451.5h1M179 451.5h1M361.5 451v2M419 451.5h1M463 451.5h1M483 451.5h1M529 451.5h1M60 452.5h1M116.5 452v2M136 452.5h1M180 452.5h1M418 452.5h1M462.5 452v2M482.5 452v2M530 452.5h2M538 452.5h1M61.5 453v2M137 453.5h1M181 453.5h2M362.5 453v2M416 453.5h2M461 453.5h1M532 453.5h1M537.5 453v2M117 454.5h1M138 454.5h1M183 454.5h1M415 454.5h1M460 454.5h1M463 454.5h1M481 454.5h1M533 454.5h2M62 455.5h1M118 455.5h1M139 455.5h1M184 455.5h1M414 455.5h1M459 455.5h1M464 455.5h1M480 455.5h1M535.5 455v3M536 455.5h1M63.5 456v2M119 456.5h1M140.5 456v2M185 456.5h2M412 456.5h2M458.5 456v2M465 456.5h1M479 456.5h1M120 457.5h1M187 457.5h1M411 457.5h1M466 457.5h1M478 457.5h1M64 458.5h1M121 458.5h1M141 458.5h2M188 458.5h1M410.5 458v2M456 458.5h2M467 458.5h1M477 458.5h1M534 458.5h1M65.5 459v2M122 459.5h1M143 459.5h1M189 459.5h2M408 459.5h2M455 459.5h1M468 459.5h1M476 459.5h1M533.5 459v2M123 460.5h1M144 460.5h1M191.5 460v2M407 460.5h1M411.5 460v2M454 460.5h1M469 460.5h1M475 460.5h1M66 461.5h1M124.5 461v2M145.5 461v2M192 461.5h2M405 461.5h2M453 461.5h1M470 461.5h1M474.5 461v2M532 461.5h1M67.5 462v2M146 462.5h1M190.5 462v2M194 462.5h1M404 462.5h1M412 462.5h1M452 462.5h1M471 462.5h1M531.5 462v2M125 463.5h1M144 463.5h1M147 463.5h1M195 463.5h2M402 463.5h2M413 463.5h1M451 463.5h1M472 463.5h2M68 464.5h1M126 464.5h1M143 464.5h1M148 464.5h1M189 464.5h1M197 464.5h2M400 464.5h2M414.5 464v2M450 464.5h1M472 464.5h1M530 464.5h1M69 465.5h1M127 465.5h1M142 465.5h1M149 465.5h1M188.5 465v2M199 465.5h1M399 465.5h1M449 465.5h1M471 465.5h1M529 465.5h1M70.5 466v2M128 466.5h1M141 466.5h1M150 466.5h1M200 466.5h2M397 466.5h2M415 466.5h1M448 466.5h1M470 466.5h1M528.5 466v2M129 467.5h1M140 467.5h1M151 467.5h1M187 467.5h1M202 467.5h2M395 467.5h2M416 467.5h1M447 467.5h1M469 467.5h1M71 468.5h1M130 468.5h1M139 468.5h1M152 468.5h1M186.5 468v2M204 468.5h2M393 468.5h2M417.5 468v2M446 468.5h1M468 468.5h1M527 468.5h1M72 469.5h1M131 469.5h1M138 469.5h1M153 469.5h2M206 469.5h1M392 469.5h1M444 469.5h2M467 469.5h1M526 469.5h1M73.5 470v2M132 470.5h1M137 470.5h1M155 470.5h1M185 470.5h1M207 470.5h2M390 470.5h2M418 470.5h1M443 470.5h1M466 470.5h1M525.5 470v2M133 471.5h1M136 471.5h1M156 471.5h1M184.5 471v2M209 471.5h2M388 471.5h2M419 471.5h1M442 471.5h1M465 471.5h1M74 472.5h1M134 472.5h2M157 472.5h1M211 472.5h2M386 472.5h2M420.5 472v2M441 472.5h1M464 472.5h1M524 472.5h1M75 473.5h1M135 473.5h1M158 473.5h1M183 473.5h1M213 473.5h2M384 473.5h2M440 473.5h1M463 473.5h1M523 473.5h1M76.5 474v2M136 474.5h2M159 474.5h2M182.5 474v2M215 474.5h2M382 474.5h2M421 474.5h1M438 474.5h2M461 474.5h2M522.5 474v2M138 475.5h1M161 475.5h1M217 475.5h2M380 475.5h2M422 475.5h1M437 475.5h1M460 475.5h1M77 476.5h1M139 476.5h1M162 476.5h1M181 476.5h1M219 476.5h3M377 476.5h3M423.5 476v2M436 476.5h1M459 476.5h1M521 476.5h1M78 477.5h1M140 477.5h1M163 477.5h2M180.5 477v2M222 477.5h2M375 477.5h2M434 477.5h2M458 477.5h1M520 477.5h1M79 478.5h1M141 478.5h1M165 478.5h1M224 478.5h2M373 478.5h2M424 478.5h1M433.5 478v2M457 478.5h1M519 478.5h1M80.5 479v2M142 479.5h1M166 479.5h1M179 479.5h1M226 479.5h3M370 479.5h3M425 479.5h1M432 479.5h1M456 479.5h1M518.5 479v2M143 480.5h1M167 480.5h2M178.5 480v2M229 480.5h3M367 480.5h3M426.5 480v2M430 480.5h2M434.5 480v2M455 480.5h1M81 481.5h1M144 481.5h1M169 481.5h1M232 481.5h2M365 481.5h2M429 481.5h1M454 481.5h1M517 481.5h1M82 482.5h1M145 482.5h2M170 482.5h1M177 482.5h1M234 482.5h3M362 482.5h3M427 482.5h2M435 482.5h1M452 482.5h2M516 482.5h1M83 483.5h1M147 483.5h1M171 483.5h2M176.5 483v2M237 483.5h3M359 483.5h3M426 483.5h2M436 483.5h1M451 483.5h1M515 483.5h1M84 484.5h1M148 484.5h1M173 484.5h1M240 484.5h3M356 484.5h3M425 484.5h1M437.5 484v2M450 484.5h1M514 484.5h1M85 485.5h1M149 485.5h1M174 485.5h2M243 485.5h4M352 485.5h4M423 485.5h2M449 485.5h1M513 485.5h1M86.5 486v2M150 486.5h2M176.5 486v2M247 486.5h3M349 486.5h3M422 486.5h1M438 486.5h1M447 486.5h2M512.5 486v2M152 487.5h1M177 487.5h2M250 487.5h4M345 487.5h4M420 487.5h2M439 487.5h1M446 487.5h1M87 488.5h1M153 488.5h1M175.5 488v2M179 488.5h1M254 488.5h5M340 488.5h5M419 488.5h1M440.5 488v2M445 488.5h1M511 488.5h1M88 489.5h1M154 489.5h2M180 489.5h2M259 489.5h5M335 489.5h5M417 489.5h2M443 489.5h2M510 489.5h1M89 490.5h1M156 490.5h1M174 490.5h1M182 490.5h2M264 490.5h6M329 490.5h6M415 490.5h2M441 490.5h2M509 490.5h1M90 491.5h1M157 491.5h1M173 491.5h1M184 491.5h1M270 491.5h7M322 491.5h7M414 491.5h1M441 491.5h1M508 491.5h1M91 492.5h1M158 492.5h2M172.5 492v2M185 492.5h2M277 492.5h12M310 492.5h12M412 492.5h2M439 492.5h2M507 492.5h1M92 493.5h1M160 493.5h1M187 493.5h2M289 493.5h21M410 493.5h2M438 493.5h1M506 493.5h1M93 494.5h1M161 494.5h1M171 494.5h1M189 494.5h2M301.5 494v30M408 494.5h2M437 494.5h1M505 494.5h1M94 495.5h1M162 495.5h2M170 495.5h1M191 495.5h1M407 495.5h1M435 495.5h2M504 495.5h1M95 496.5h1M164 496.5h1M169.5 496v2M192 496.5h2M405 496.5h2M434 496.5h1M503 496.5h1M96 497.5h1M165 497.5h2M194 497.5h2M403 497.5h2M432 497.5h2M502 497.5h1M97 498.5h1M167 498.5h2M196 498.5h2M401 498.5h2M431 498.5h1M501 498.5h1M98 499.5h1M167 499.5h3M198 499.5h2M399 499.5h2M429 499.5h2M500 499.5h1M99 500.5h1M166.5 500v2M170 500.5h1M200 500.5h2M397 500.5h3M428 500.5h1M499 500.5h1M100 501.5h1M171 501.5h2M202 501.5h2M395 501.5h2M400.5 501v2M426 501.5h2M498 501.5h1M101 502.5h1M165 502.5h1M173 502.5h2M204 502.5h2M393 502.5h2M424 502.5h2M497 502.5h1M102 503.5h1M164.5 503v2M175 503.5h1M206 503.5h3M390 503.5h3M401.5 503v2M423 503.5h1M496 503.5h1M103 504.5h1M176 504.5h2M209 504.5h2M388 504.5h2M421 504.5h2M495 504.5h1M104 505.5h1M163 505.5h1M178 505.5h2M210 505.5h3M386 505.5h2M402 505.5h1M419 505.5h2M494 505.5h1M105 506.5h1M162.5 506v2M180 506.5h1M210 506.5h1M213 506.5h3M383 506.5h3M403.5 506v2M418 506.5h1M493 506.5h1M106 507.5h1M181 507.5h2M209.5 507v2M216 507.5h2M381 507.5h2M416 507.5h2M492 507.5h1M107 508.5h1M161 508.5h1M183 508.5h2M218 508.5h3M378 508.5h3M404.5 508v2M414 508.5h2M491 508.5h1M108 509.5h1M160.5 509v2M185 509.5h2M208.5 509v3M221 509.5h2M376 509.5h2M412 509.5h2M490 509.5h1M109 510.5h1M187 510.5h2M223 510.5h3M373 510.5h3M405.5 510v2M410 510.5h2M489 510.5h1M110 511.5h1M159 511.5h1M189 511.5h2M226 511.5h3M370 511.5h3M408 511.5h2M488 511.5h1M111 512.5h2M158.5 512v2M191 512.5h2M207.5 512v3M229 512.5h3M367 512.5h3M406 512.5h2M486 512.5h2M113 513.5h1M193 513.5h2M232 513.5h4M363 513.5h4M404 513.5h3M485 513.5h1M114 514.5h1M157 514.5h1M195 514.5h2M236 514.5h3M360 514.5h4M402 514.5h2M407.5 514v2M484 514.5h1M115 515.5h1M156.5 515v2M197 515.5h2M206.5 515v2M239 515.5h4M356 515.5h4M363 515.5h1M400 515.5h2M483 515.5h1M116 516.5h1M199 516.5h2M243 516.5h4M352 516.5h4M364.5 516v3M398 516.5h2M408.5 516v2M482 516.5h1M117 517.5h1M155 517.5h1M201 517.5h2M205.5 517v3M247 517.5h4M348 517.5h4M396 517.5h2M481 517.5h1M118 518.5h2M154.5 518v2M203 518.5h2M247.5 518v3M251 518.5h5M343 518.5h5M394 518.5h2M409.5 518v2M479 518.5h2M120 519.5h1M206 519.5h2M256 519.5h5M338 519.5h5M365.5 519v4M391 519.5h3M478 519.5h1M121 520.5h1M153 520.5h1M208 520.5h2M261 520.5h6M332 520.5h6M389 520.5h2M410.5 520v2M477 520.5h1M122 521.5h1M152.5 521v2M210 521.5h3M246.5 521v4M267 521.5h8M324 521.5h8M386 521.5h3M476 521.5h1M123 522.5h2M213 522.5h2M275 522.5h13M311 522.5h13M325.5 522v7M384 522.5h2M411.5 522v2M474 522.5h2M125 523.5h1M151 523.5h1M215 523.5h3M286.5 523v7M288 523.5h13M302 523.5h9M366.5 523v3M381 523.5h3M473 523.5h1M126 524.5h1M150.5 524v2M218 524.5h3M378 524.5h3M412.5 524v2M472 524.5h1M127 525.5h2M221 525.5h3M245.5 525v4M375 525.5h3M470 525.5h2M129 526.5h1M149 526.5h1M224 526.5h3M367.5 526v3M372 526.5h3M413.5 526v2M469 526.5h1M130 527.5h1M148.5 527v2M227 527.5h3M369 527.5h3M468 527.5h1M131 528.5h2M230 528.5h4M365 528.5h2M368 528.5h1M414.5 528v2M466 528.5h2M133 529.5h1M147 529.5h1M234 529.5h3M244.5 529v3M326.5 529v8M362 529.5h3M465 529.5h1M134 530.5h1M146.5 530v2M237 530.5h4M285.5 530v19M358 530.5h4M415.5 530v2M464 530.5h1M135 531.5h2M241 531.5h3M354 531.5h4M462 531.5h2M137 532.5h1M145 532.5h1M245 532.5h4M350 532.5h4M416.5 532v2M461 532.5h1M138 533.5h2M144.5 533v2M249 533.5h5M345 533.5h5M459 533.5h2M140 534.5h1M254 534.5h6M339 534.5h6M417.5 534v2M458 534.5h1M141 535.5h3M260 535.5h6M333 535.5h6M456 535.5h2M143 536.5h1M266 536.5h9M324 536.5h2M327 536.5h6M418.5 536v2M455 536.5h1M144 537.5h2M275 537.5h10M286 537.5h2M311 537.5h13M453 537.5h2M146 538.5h1M288 538.5h23M419.5 538v2M452 538.5h1M147 539.5h2M450 539.5h2M149 540.5h1M420.5 540v2M449 540.5h1M150 541.5h2M447 541.5h2M152 542.5h2M421.5 542v2M445 542.5h2M154 543.5h1M444 543.5h1M155 544.5h2M422.5 544v2M442 544.5h2M157 545.5h2M440 545.5h2M159 546.5h2M423.5 546v2M438 546.5h2M161 547.5h1M437 547.5h1M162 548.5h2M424.5 548v2M435 548.5h2M164 549.5h2M284.5 549v22M433 549.5h2M166 550.5h2M425.5 550v2M431 550.5h2M168 551.5h2M429 551.5h2M170 552.5h2M426 552.5h3M172 553.5h2M425 553.5h2M174 554.5h2M423 554.5h2M176 555.5h2M421 555.5h2M178 556.5h2M419 556.5h2M180 557.5h2M417 557.5h2M182 558.5h3M414 558.5h3M185 559.5h2M412 559.5h2M187 560.5h2M410 560.5h2M189 561.5h3M407 561.5h3M192 562.5h2M405 562.5h2M194 563.5h3M402 563.5h3M197 564.5h2M400 564.5h2M199 565.5h3M397 565.5h3M202 566.5h3M394 566.5h3M205 567.5h3M391 567.5h3M208 568.5h3M388 568.5h3M211 569.5h3M385 569.5h3M214 570.5h3M382 570.5h3M217 571.5h3M283.5 571v12M379 571.5h3M220 572.5h4M375 572.5h4M224 573.5h3M372 573.5h3M227 574.5h4M368 574.5h4M231 575.5h5M363 575.5h5M236 576.5h4M359 576.5h4M240 577.5h5M354 577.5h5M245 578.5h5M349 578.5h5M250 579.5h6M343 579.5h6M256 580.5h7M336 580.5h7M263 581.5h9M327 581.5h9M272 582.5h11M284 582.5h2M313 582.5h14M286 583.5h27"/>
<path stroke="#c0c0c0" d="M599.5 0v600M296.5 2v13M296.5 16v36M297.5 52v8M297.5 61v3M297.5 72v3M297.5 106v45M298.5 151v99M299.5 250v49M2 299.5h13M16 299.5h44M61 299.5h14M106 299.5h193M300 299.5h72M373 299.5h22M396 299.5h5M403 299.5h3M407 299.5h22M430 299.5h63M524 299.5h14M539 299.5h44M584 299.5h13M299.5 300v49M300.5 349v99M301.5 448v45M301.5 524v3M301.5 535v3M301.5 539v8M302.5 547v36M302.5 584v13"/>
<path stroke="#808080" d="M293.5 61v14M280.5 64v4M285.5 64v9M289.5 64v8M297.5 64v8M300.5 64v8M304.5 64v8M308.5 64v8M316.5 64v9M333.5 64v3M276.5 65v4M321.5 65v4M325.5 65v4M329.5 65v4M251.5 66v2M264.5 66v4M268.5 66v4M260.5 67v4M332.5 67v7M337.5 67v4M341.5 67v4M252.5 68v4M256.5 68v4M281.5 68v5M345.5 68v2M248.5 69v2M277.5 69v4M320.5 69v4M324.5 69v5M328.5 69v5M349.5 69v2M244.5 70v2M265.5 70v5M269.5 70v4M344.5 70v4M240.5 71v2M249.5 71v4M261.5 71v4M336.5 71v4M340.5 71v5M348.5 71v4M357.5 71v2M236.5 72v2M245.5 72v4M253.5 72v5M257.5 72v4M361.5 72v2M241.5 73v4M356.5 73v4M365.5 73v2M374.5 73v2M237.5 74v4M331.5 74v3M343.5 74v3M360.5 74v4M369.5 74v2M228.5 75v2M250.5 75v3M347.5 75v2M364.5 75v4M373.5 75v2M224.5 76v2M246.5 76v3M368.5 76v4M220.5 77v2M229.5 77v4M242.5 77v3M254.5 77v3M355.5 77v2M372.5 77v3M377.5 77v2M211 78.5h1M225.5 78v2M238.5 78v3M359.5 78v2M381.5 78v2M212.5 79v2M216.5 79v2M221.5 79v2M363.5 79v2M376.5 79v2M226.5 80v2M367.5 80v3M371.5 80v3M380.5 80v2M384.5 80v2M213.5 81v3M217.5 81v2M222.5 81v2M230.5 81v2M375.5 81v2M388.5 81v2M209.5 82v2M227.5 82v2M379.5 82v2M383.5 82v4M205.5 83v2M218.5 83v2M223.5 83v2M370.5 83v2M374.5 83v2M387.5 83v2M210.5 84v2M214.5 84v3M378.5 84v2M201.5 85v2M206.5 85v2M219.5 85v2M369 85.5h1M386.5 85v2M396.5 85v2M211.5 86v2M382.5 86v2M400 86.5h1M197 87.5h1M202.5 87v2M207.5 87v2M215.5 87v2M385.5 87v2M395.5 87v2M399.5 87v2M198.5 88v2M212.5 88v2M403.5 88v2M203.5 89v2M208.5 89v2M216.5 89v2M394.5 89v2M398.5 89v2M190 90.5h1M199.5 90v2M402.5 90v2M407 90.5h1M411.5 90v2M191.5 91v2M204.5 91v2M393.5 91v2M397.5 91v2M406.5 91v2M186 92.5h1M200.5 92v2M401.5 92v2M410.5 92v2M187.5 93v2M192.5 93v2M396 93.5h1M405.5 93v2M183 94.5h1M201 94.5h1M400.5 94v2M409.5 94v2M414 94.5h1M184.5 95v2M188.5 95v2M193.5 95v2M404.5 95v2M413.5 95v2M179 96.5h1M408.5 96v2M418 96.5h1M175.5 97v2M180.5 97v2M185.5 97v2M189.5 97v2M194 97.5h1M403 97.5h1M412.5 97v2M417.5 97v2M407.5 98v2M421 98.5h1M176.5 99v2M181.5 99v2M186.5 99v2M190 99.5h1M411.5 99v2M416.5 99v2M420.5 99v2M406.5 100v2M425 100.5h1M172 101.5h1M177 101.5h1M182.5 101v2M187 101.5h1M410 101.5h1M415.5 101v2M419.5 101v2M424.5 101v2M173.5 102v2M178.5 102v2M169 103.5h1M183 103.5h1M414 103.5h1M418.5 103v2M423.5 103v2M170.5 104v2M174 104.5h1M179.5 104v2M165 105.5h1M175.5 105v2M417 105.5h1M422.5 105v2M432 105.5h1M166.5 106v2M171 106.5h1M180.5 106v2M431 106.5h1M172.5 107v2M176 107.5h1M421 107.5h1M430 107.5h1M435 107.5h1M162 108.5h1M167 108.5h1M181 108.5h1M429.5 108v2M434.5 108v2M163.5 109v2M168 109.5h1M173 109.5h1M438 109.5h1M169.5 110v2M428 110.5h1M433 110.5h1M437.5 110v2M164 111.5h1M427 111.5h1M432.5 111v2M165.5 112v2M170 112.5h1M436.5 112v2M442 112.5h1M155 113.5h1M431 113.5h1M441 113.5h1M446 113.5h1M156 114.5h1M166 114.5h1M435.5 114v2M440 114.5h1M445.5 114v2M152 115.5h1M157 115.5h1M439.5 115v2M153 116.5h1M158.5 116v2M434 116.5h1M444 116.5h1M154 117.5h1M438 117.5h1M443 117.5h1M448 117.5h1M149 118.5h1M155.5 118v2M159 118.5h1M437 118.5h1M442 118.5h1M447 118.5h1M150 119.5h1M160 119.5h1M441 119.5h1M446 119.5h1M146 120.5h1M151 120.5h1M156 120.5h1M440.5 120v2M445.5 120v2M451 120.5h1M141 121.5h1M147 121.5h1M152.5 121v2M157 121.5h1M450 121.5h1M142 122.5h1M148 122.5h1M439 122.5h1M444 122.5h1M449 122.5h1M454 122.5h1M143 123.5h1M149.5 123v2M153 123.5h1M438 123.5h1M443 123.5h1M448.5 123v2M453 123.5h1M144 124.5h1M154 124.5h1M452 124.5h1M145 125.5h1M150 125.5h1M447 125.5h1M451.5 125v2M458 125.5h1M140 126.5h1M146.5 126v2M151 126.5h1M446 126.5h1M457 126.5h1M141 127.5h1M450 127.5h1M456 127.5h1M142 128.5h1M147 128.5h1M449 128.5h1M455 128.5h1M137 129.5h1M143.5 129v2M148 129.5h1M454 129.5h1M138 130.5h1M149 130.5h1M453 130.5h1M139 131.5h1M144 131.5h1M150 131.5h1M452 131.5h1M464 131.5h1M134 132.5h1M140 132.5h1M145 132.5h1M463 132.5h1M135 133.5h1M141 133.5h1M461 133.5h2M131 134.5h1M136 134.5h1M142 134.5h1M460 134.5h1M466 134.5h1M132 135.5h1M137 135.5h1M459 135.5h1M465 135.5h1M133 136.5h1M138 136.5h1M458 136.5h1M464 136.5h1M134.5 137v2M139 137.5h1M463 137.5h1M469 137.5h1M347.5 138v2M462 138.5h1M468 138.5h1M135 139.5h1M405 139.5h1M461 139.5h1M467 139.5h1M125 140.5h1M136 140.5h1M346.5 140v3M466 140.5h1M472 140.5h1M126 141.5h1M189 141.5h1M404 141.5h1M465 141.5h1M471 141.5h1M477 141.5h1M127 142.5h1M464 142.5h1M469 142.5h2M476 142.5h1M128 143.5h1M190 143.5h1M345.5 143v3M403 143.5h1M468 143.5h1M475 143.5h1M122 144.5h1M129 144.5h1M467 144.5h1M474 144.5h1M123 145.5h1M130 145.5h1M191 145.5h1M401 145.5h1M466 145.5h1M472 145.5h2M124 146.5h1M131 146.5h1M344.5 146v3M471 146.5h1M478 146.5h1M120 147.5h1M125 147.5h2M193 147.5h1M400 147.5h1M470 147.5h1M477 147.5h1M121 148.5h1M127 148.5h1M469 148.5h1M475 148.5h2M122 149.5h1M128 149.5h1M194 149.5h1M343.5 149v2M399 149.5h1M468 149.5h1M474 149.5h1M480 149.5h1M117 150.5h1M123 150.5h2M467 150.5h1M473 150.5h1M479 150.5h1M118 151.5h1M125 151.5h1M196 151.5h1M397 151.5h1M472 151.5h1M477 151.5h2M113 152.5h1M119 152.5h1M126 152.5h1M476 152.5h1M483 152.5h1M114 153.5h2M120 153.5h2M197 153.5h1M396 153.5h1M475 153.5h1M482 153.5h1M116 154.5h1M122 154.5h1M474 154.5h1M480 154.5h2M117 155.5h1M123 155.5h1M198 155.5h1M395 155.5h1M479 155.5h1M485 155.5h1M112 156.5h1M118 156.5h1M478 156.5h1M484 156.5h1M113 157.5h1M119 157.5h1M200 157.5h1M393 157.5h1M477 157.5h1M482 157.5h2M114 158.5h1M120 158.5h2M481 158.5h1M115 159.5h2M122 159.5h1M201 159.5h1M392 159.5h1M480 159.5h1M109 160.5h1M117 160.5h1M123 160.5h1M479 160.5h1M110 161.5h2M118 161.5h1M203 161.5h1M391 161.5h1M112 162.5h2M490 162.5h1M107 163.5h1M114 163.5h2M204 163.5h1M389 163.5h1M488 163.5h2M108 164.5h2M116 164.5h1M487 164.5h1M110 165.5h1M205 165.5h1M388 165.5h1M485 165.5h2M493 165.5h1M105 166.5h1M111 166.5h2M484 166.5h1M491 166.5h2M106 167.5h1M113 167.5h1M207 167.5h1M387 167.5h1M490 167.5h1M107 168.5h1M489 168.5h1M108 169.5h2M208 169.5h1M385 169.5h1M487 169.5h2M495 169.5h1M110 170.5h1M486 170.5h1M493 170.5h2M111 171.5h1M210 171.5h1M384 171.5h1M492 171.5h1M490 172.5h2M497 172.5h1M100 173.5h1M211 173.5h1M383 173.5h1M489 173.5h1M495 173.5h2M101 174.5h2M494 174.5h1M103 175.5h2M212 175.5h1M381 175.5h1M492 175.5h2M500 175.5h2M105 176.5h2M491 176.5h1M498 176.5h2M98 177.5h1M107 177.5h1M214 177.5h1M380 177.5h1M496 177.5h2M99 178.5h2M495 178.5h1M101 179.5h2M215 179.5h1M379 179.5h1M493 179.5h2M502 179.5h1M96 180.5h1M103 180.5h2M491 180.5h2M500 180.5h2M97 181.5h2M105 181.5h1M217 181.5h1M377 181.5h1M490 181.5h1M498 181.5h2M99 182.5h2M496 182.5h2M101 183.5h2M218 183.5h1M376 183.5h1M495 183.5h1M504 183.5h1M94 184.5h1M103 184.5h1M502 184.5h2M95 185.5h2M219 185.5h1M375 185.5h1M500 185.5h2M97 186.5h2M498 186.5h2M506 186.5h1M90 187.5h2M99 187.5h2M221 187.5h1M373 187.5h1M497 187.5h1M504 187.5h2M92 188.5h2M101 188.5h1M502 188.5h2M94 189.5h2M222 189.5h1M372 189.5h1M500 189.5h2M96 190.5h2M499 190.5h1M508 190.5h1M90 191.5h1M98 191.5h2M224 191.5h1M371 191.5h1M506 191.5h2M91 192.5h2M100 192.5h2M504 192.5h2M93 193.5h2M225 193.5h1M369 193.5h1M502 193.5h2M95 194.5h2M501 194.5h1M88 195.5h2M97 195.5h1M226 195.5h1M368 195.5h1M90 196.5h2M92 197.5h2M228 197.5h1M367 197.5h1M511 197.5h1M86 198.5h1M94 198.5h2M509 198.5h2M87 199.5h2M229 199.5h1M365 199.5h1M507 199.5h2M89 200.5h2M505 200.5h2M91 201.5h2M231 201.5h1M364 201.5h1M504 201.5h1M512 201.5h2M85 202.5h2M93 202.5h1M510 202.5h2M87 203.5h2M232 203.5h1M363 203.5h1M508 203.5h2M89 204.5h2M506 204.5h2M91 205.5h2M233 205.5h1M361 205.5h1M514 205.5h2M512 206.5h2M235 207.5h1M360 207.5h1M510 207.5h2M508 208.5h2M236 209.5h1M359 209.5h1M515 209.5h2M81 210.5h2M513 210.5h2M83 211.5h2M238 211.5h1M357 211.5h1M511 211.5h2M520 211.5h1M85 212.5h2M509 212.5h2M518 212.5h2M87 213.5h2M239 213.5h1M356 213.5h1M515 213.5h3M80 214.5h2M512 214.5h3M82 215.5h4M240 215.5h1M355 215.5h1M473 215.5h1M510 215.5h2M86 216.5h2M471 216.5h1M508 216.5h2M518 216.5h2M78 217.5h2M125 217.5h1M242 217.5h1M469 217.5h1M516 217.5h2M80 218.5h2M127 218.5h1M467 218.5h1M514 218.5h2M82 219.5h2M129 219.5h1M243 219.5h1M352 219.5h1M465 219.5h1M512 219.5h2M84 220.5h2M131 220.5h1M463 220.5h1M520 220.5h2M77 221.5h2M133 221.5h1M245 221.5h1M351 221.5h1M461 221.5h1M518 221.5h2M79 222.5h2M135 222.5h1M459 222.5h1M516 222.5h2M81 223.5h2M137 223.5h1M246 223.5h1M350 223.5h1M457 223.5h1M514 223.5h2M73 224.5h2M83 224.5h2M139 224.5h1M455 224.5h1M521 224.5h2M75 225.5h2M141 225.5h1M247 225.5h1M348 225.5h1M453 225.5h1M519 225.5h2M77 226.5h3M143 226.5h1M451 226.5h1M517 226.5h2M80 227.5h3M145 227.5h1M249 227.5h1M347 227.5h1M449 227.5h1M515 227.5h2M83 228.5h2M147 228.5h1M447 228.5h1M522 228.5h2M74 229.5h2M85 229.5h1M149 229.5h1M250 229.5h1M346 229.5h1M443 229.5h1M445 229.5h1M518 229.5h4M76 230.5h4M151 230.5h1M441 230.5h1M516 230.5h2M80 231.5h3M153 231.5h1M252 231.5h1M344 231.5h1M439 231.5h1M155 232.5h1M157 232.5h1M437 232.5h1M73 233.5h2M159 233.5h1M253 233.5h1M343 233.5h1M435 233.5h1M75 234.5h4M161 234.5h1M433 234.5h1M79 235.5h2M163 235.5h1M254 235.5h1M342 235.5h1M431 235.5h1M165 236.5h1M429 236.5h1M524 236.5h3M72 237.5h2M167 237.5h1M256 237.5h1M340 237.5h1M427 237.5h1M520 237.5h4M74 238.5h4M169 238.5h1M425 238.5h1M518 238.5h2M78 239.5h2M171 239.5h1M257 239.5h1M339 239.5h1M423 239.5h1M173 240.5h1M421 240.5h1M525 240.5h3M71 241.5h2M175 241.5h1M259 241.5h1M338 241.5h1M419 241.5h1M521 241.5h4M73 242.5h4M177 242.5h1M417 242.5h1M519 242.5h2M77 243.5h2M179 243.5h1M260 243.5h1M336 243.5h1M415 243.5h1M181 244.5h1M526 244.5h3M183 245.5h1M261 245.5h1M335 245.5h1M411 245.5h1M522 245.5h4M185 246.5h1M409 246.5h1M520 246.5h2M187 247.5h1M189 247.5h1M263 247.5h1M334 247.5h1M407 247.5h1M191 248.5h1M405 248.5h1M527 248.5h3M69 249.5h2M193 249.5h1M264 249.5h1M332 249.5h1M403 249.5h1M523 249.5h4M71 250.5h4M195 250.5h1M401 250.5h1M521 250.5h2M75 251.5h2M197 251.5h1M265 251.5h1M331 251.5h1M399 251.5h1M531 251.5h2M199 252.5h1M397 252.5h1M526 252.5h5M68 253.5h2M201 253.5h1M267 253.5h1M330 253.5h1M395 253.5h1M522 253.5h4M70 254.5h4M203 254.5h1M393 254.5h1M519 254.5h3M74 255.5h3M205 255.5h1M268 255.5h1M328 255.5h1M391 255.5h1M207 256.5h1M389 256.5h1M527 256.5h4M67 257.5h4M209 257.5h1M270 257.5h1M327 257.5h1M385 257.5h1M387 257.5h1M523 257.5h4M71 258.5h5M211 258.5h1M383 258.5h1M213 259.5h1M271 259.5h1M326 259.5h1M381 259.5h1M215 260.5h1M379 260.5h1M528 260.5h4M67 261.5h4M217 261.5h1M272 261.5h1M324 261.5h1M377 261.5h1M524 261.5h4M71 262.5h4M219 262.5h1M221 262.5h1M375 262.5h1M223 263.5h1M274 263.5h1M323 263.5h1M373 263.5h1M225 264.5h1M371 264.5h1M528 264.5h5M64 265.5h3M227 265.5h1M275 265.5h1M322 265.5h1M369 265.5h1M524 265.5h4M67 266.5h7M229 266.5h1M367 266.5h1M74 267.5h3M231 267.5h1M277 267.5h1M320 267.5h1M233 268.5h1M363 268.5h1M529 268.5h4M65 269.5h4M235 269.5h1M278 269.5h1M319 269.5h1M361 269.5h1M525 269.5h4M69 270.5h5M237 270.5h1M359 270.5h1M239 271.5h1M279 271.5h1M318 271.5h1M357 271.5h1M241 272.5h1M355 272.5h1M65 273.5h4M243 273.5h1M281 273.5h1M316 273.5h1M353 273.5h1M69 274.5h5M245 274.5h1M351 274.5h1M247 275.5h1M282 275.5h1M315 275.5h1M349 275.5h1M249 276.5h1M347 276.5h1M530 276.5h4M65 277.5h4M251 277.5h1M253 277.5h1M284 277.5h1M314 277.5h1M345 277.5h1M526 277.5h4M69 278.5h4M255 278.5h1M343 278.5h1M257 279.5h1M285 279.5h1M312 279.5h1M341 279.5h1M259 280.5h1M339 280.5h1M530 280.5h5M261 281.5h1M286 281.5h1M311 281.5h1M337 281.5h1M526 281.5h4M64 282.5h9M263 282.5h1M335 282.5h1M265 283.5h1M288 283.5h1M310 283.5h1M333 283.5h1M267 284.5h1M331 284.5h1M269 285.5h1M289 285.5h1M308 285.5h1M327 285.5h1M329 285.5h1M526 285.5h9M271 286.5h1M325 286.5h1M273 287.5h1M291 287.5h1M307 287.5h1M323 287.5h1M275 288.5h1M321 288.5h1M277 289.5h1M292 289.5h1M306 289.5h1M319 289.5h1M527 289.5h8M64 290.5h8M279 290.5h1M317 290.5h1M281 291.5h1M293 291.5h1M304 291.5h1M315 291.5h1M283 292.5h1M285 292.5h1M313 292.5h1M287 293.5h1M295 293.5h1M303 293.5h1M311 293.5h1M524 293.5h14M64 294.5h8M289 294.5h1M309 294.5h1M291 295.5h1M296 295.5h1M302 295.5h1M307 295.5h1M293 296.5h1M305 296.5h1M295 297.5h1M298 297.5h1M300 297.5h1M303 297.5h1M527 297.5h8M64 298.5h8M297 298.5h1M301 298.5h1M299 299.5h1M297 300.5h1M301 300.5h1M527 300.5h8M64 301.5h8M295 301.5h1M298 301.5h1M300 301.5h1M303 301.5h1M293 302.5h1M305 302.5h1M291 303.5h1M296 303.5h1M302 303.5h1M307 303.5h1M289 304.5h1M309 304.5h1M527 304.5h8M61 305.5h14M287 305.5h1M295 305.5h1M303 305.5h1M311 305.5h1M285 306.5h1M313 306.5h1M315 306.5h1M283 307.5h1M294 307.5h1M305 307.5h1M317 307.5h1M281 308.5h1M319 308.5h1M527 308.5h8M64 309.5h8M279 309.5h1M292 309.5h1M306 309.5h1M321 309.5h1M277 310.5h1M323 310.5h1M275 311.5h1M291 311.5h1M307 311.5h1M325 311.5h1M273 312.5h1M327 312.5h1M64 313.5h9M269 313.5h1M271 313.5h1M290 313.5h1M309 313.5h1M329 313.5h1M267 314.5h1M331 314.5h1M265 315.5h1M288 315.5h1M310 315.5h1M333 315.5h1M263 316.5h1M335 316.5h1M526 316.5h9M68 317.5h5M261 317.5h1M287 317.5h1M312 317.5h1M337 317.5h1M64 318.5h4M259 318.5h1M339 318.5h1M257 319.5h1M286 319.5h1M313 319.5h1M341 319.5h1M255 320.5h1M343 320.5h1M526 320.5h4M69 321.5h4M253 321.5h1M284 321.5h1M314 321.5h1M345 321.5h1M347 321.5h1M530 321.5h4M65 322.5h4M251 322.5h1M349 322.5h1M249 323.5h1M283 323.5h1M316 323.5h1M351 323.5h1M247 324.5h1M353 324.5h1M525 324.5h4M245 325.5h1M282 325.5h1M317 325.5h1M355 325.5h1M529 325.5h5M243 326.5h1M357 326.5h1M241 327.5h1M280 327.5h1M319 327.5h1M359 327.5h1M239 328.5h1M361 328.5h1M525 328.5h4M70 329.5h4M237 329.5h1M279 329.5h1M320 329.5h1M363 329.5h1M529 329.5h5M66 330.5h4M235 330.5h1M365 330.5h1M233 331.5h1M278 331.5h1M321 331.5h1M367 331.5h1M522 331.5h3M231 332.5h1M369 332.5h1M525 332.5h7M70 333.5h5M229 333.5h1M276 333.5h1M323 333.5h1M371 333.5h1M532 333.5h3M66 334.5h4M227 334.5h1M373 334.5h1M225 335.5h1M275 335.5h1M324 335.5h1M375 335.5h1M223 336.5h1M377 336.5h1M379 336.5h1M524 336.5h4M71 337.5h4M221 337.5h1M274 337.5h1M326 337.5h1M528 337.5h4M67 338.5h4M219 338.5h1M383 338.5h1M217 339.5h1M272 339.5h1M327 339.5h1M385 339.5h1M215 340.5h1M387 340.5h1M523 340.5h4M72 341.5h4M211 341.5h1M213 341.5h1M271 341.5h1M328 341.5h1M389 341.5h1M527 341.5h5M68 342.5h4M209 342.5h1M391 342.5h1M207 343.5h1M270 343.5h1M330 343.5h1M522 343.5h2M77 344.5h3M205 344.5h1M395 344.5h1M524 344.5h4M72 345.5h5M203 345.5h1M268 345.5h1M331 345.5h1M397 345.5h1M528 345.5h3M68 346.5h4M201 346.5h1M399 346.5h1M66 347.5h2M199 347.5h1M267 347.5h1M333 347.5h1M401 347.5h1M522 347.5h2M75 348.5h3M197 348.5h1M403 348.5h1M524 348.5h4M71 349.5h4M195 349.5h1M266 349.5h1M334 349.5h1M405 349.5h1M528 349.5h2M69 350.5h2M193 350.5h1M407 350.5h1M191 351.5h1M264 351.5h1M335 351.5h1M409 351.5h1M411 351.5h1M76 352.5h3M189 352.5h1M413 352.5h1M72 353.5h4M187 353.5h1M263 353.5h1M337 353.5h1M415 353.5h1M70 354.5h2M185 354.5h1M417 354.5h1M183 355.5h1M262 355.5h1M338 355.5h1M419 355.5h1M520 355.5h2M77 356.5h3M181 356.5h1M421 356.5h1M522 356.5h4M73 357.5h4M179 357.5h1M260 357.5h1M339 357.5h1M423 357.5h1M526 357.5h2M71 358.5h2M177 358.5h1M425 358.5h1M175 359.5h1M259 359.5h1M341 359.5h1M427 359.5h1M519 359.5h2M78 360.5h3M173 360.5h1M429 360.5h1M521 360.5h4M74 361.5h4M171 361.5h1M258 361.5h1M342 361.5h1M431 361.5h1M525 361.5h2M72 362.5h2M169 362.5h1M433 362.5h1M167 363.5h1M256 363.5h1M344 363.5h1M435 363.5h1M518 363.5h2M165 364.5h1M437 364.5h1M520 364.5h4M163 365.5h1M255 365.5h1M345 365.5h1M439 365.5h1M524 365.5h2M161 366.5h1M441 366.5h1M443 366.5h1M159 367.5h1M254 367.5h1M346 367.5h1M445 367.5h1M516 367.5h2M81 368.5h2M157 368.5h1M447 368.5h1M518 368.5h4M77 369.5h4M153 369.5h1M155 369.5h1M252 369.5h1M348 369.5h1M449 369.5h1M513 369.5h1M522 369.5h3M75 370.5h2M151 370.5h1M451 370.5h1M514 370.5h2M82 371.5h2M149 371.5h1M251 371.5h1M349 371.5h1M453 371.5h1M516 371.5h3M80 372.5h2M147 372.5h1M455 372.5h1M519 372.5h3M78 373.5h2M145 373.5h1M250 373.5h1M351 373.5h1M457 373.5h1M522 373.5h2M76 374.5h2M143 374.5h1M459 374.5h1M514 374.5h2M524 374.5h2M83 375.5h2M141 375.5h1M248 375.5h1M352 375.5h1M461 375.5h1M516 375.5h2M81 376.5h2M139 376.5h1M463 376.5h1M518 376.5h2M79 377.5h2M137 377.5h1M247 377.5h1M353 377.5h1M465 377.5h1M520 377.5h2M77 378.5h2M135 378.5h1M467 378.5h1M513 378.5h2M85 379.5h2M133 379.5h1M246 379.5h1M355 379.5h1M469 379.5h1M515 379.5h2M83 380.5h2M131 380.5h1M471 380.5h1M517 380.5h2M81 381.5h2M129 381.5h1M245 381.5h1M356 381.5h1M473 381.5h1M519 381.5h2M79 382.5h2M89 382.5h2M127 382.5h1M511 382.5h2M87 383.5h2M125 383.5h1M243 383.5h1M358 383.5h1M513 383.5h4M84 384.5h3M517 384.5h2M81 385.5h3M242 385.5h1M359 385.5h1M510 385.5h2M79 386.5h2M88 386.5h2M512 386.5h2M78 387.5h1M86 387.5h2M241 387.5h1M360 387.5h1M514 387.5h2M84 388.5h2M516 388.5h2M82 389.5h2M239 389.5h1M362 389.5h1M89 390.5h2M87 391.5h2M238 391.5h1M363 391.5h1M85 392.5h2M83 393.5h2M237 393.5h1M365 393.5h1M506 393.5h2M91 394.5h2M508 394.5h2M89 395.5h2M235 395.5h1M366 395.5h1M510 395.5h2M87 396.5h2M505 396.5h1M512 396.5h2M85 397.5h2M94 397.5h1M234 397.5h1M367 397.5h1M506 397.5h2M92 398.5h2M508 398.5h2M90 399.5h2M233 399.5h1M369 399.5h1M510 399.5h2M88 400.5h2M503 400.5h2M512 400.5h1M87 401.5h1M231 401.5h1M370 401.5h1M505 401.5h2M507 402.5h2M230 403.5h1M372 403.5h1M501 403.5h1M509 403.5h2M97 404.5h1M502 404.5h2M95 405.5h2M229 405.5h1M373 405.5h1M504 405.5h2M93 406.5h2M497 406.5h1M506 406.5h2M91 407.5h2M227 407.5h1M374 407.5h1M498 407.5h2M508 407.5h1M90 408.5h1M99 408.5h1M500 408.5h2M97 409.5h2M226 409.5h1M376 409.5h1M502 409.5h2M95 410.5h2M497 410.5h1M504 410.5h2M93 411.5h2M101 411.5h1M225 411.5h1M377 411.5h1M498 411.5h2M506 411.5h2M92 412.5h1M99 412.5h2M500 412.5h2M508 412.5h1M97 413.5h2M223 413.5h1M379 413.5h1M405 413.5h8M502 413.5h2M95 414.5h2M413 414.5h9M495 414.5h1M504 414.5h1M94 415.5h1M103 415.5h1M222 415.5h1M380 415.5h1M496 415.5h2M101 416.5h2M498 416.5h2M99 417.5h2M108 417.5h1M221 417.5h1M381 417.5h1M493 417.5h1M500 417.5h2M97 418.5h2M106 418.5h2M494 418.5h2M502 418.5h1M96 419.5h1M104 419.5h2M219 419.5h1M383 419.5h1M496 419.5h2M102 420.5h2M498 420.5h2M101 421.5h1M218 421.5h1M384 421.5h1M491 421.5h1M500 421.5h1M99 422.5h2M107 422.5h1M492 422.5h2M97 423.5h2M105 423.5h2M217 423.5h1M386 423.5h1M494 423.5h2M104 424.5h1M496 424.5h2M102 425.5h2M109 425.5h1M215 425.5h1M387 425.5h1M498 425.5h1M101 426.5h1M107 426.5h2M106 427.5h1M214 427.5h1M388 427.5h1M487 427.5h1M104 428.5h2M112 428.5h1M488 428.5h1M103 429.5h1M110 429.5h2M213 429.5h1M390 429.5h1M489 429.5h1M109 430.5h1M490 430.5h2M108 431.5h1M211 431.5h1M391 431.5h1M485 431.5h1M492 431.5h1M106 432.5h2M114 432.5h1M486 432.5h2M493 432.5h1M105 433.5h1M112 433.5h2M210 433.5h1M393 433.5h1M488 433.5h1M111 434.5h1M482 434.5h1M489 434.5h2M109 435.5h2M209 435.5h1M483 435.5h2M491 435.5h1M108 436.5h1M485 436.5h2M207 437.5h1M395 437.5h1M480 437.5h1M487 437.5h2M119 438.5h1M475 438.5h1M481 438.5h1M489 438.5h1M118 439.5h1M206 439.5h1M397 439.5h1M476 439.5h1M482 439.5h1M116 440.5h2M477 440.5h2M483 440.5h2M115 441.5h1M121 441.5h1M205 441.5h1M398 441.5h1M479 441.5h1M485 441.5h1M114 442.5h1M120 442.5h1M480 442.5h1M486 442.5h1M113 443.5h1M118 443.5h2M203 443.5h1M400 443.5h1M475 443.5h1M481 443.5h1M117 444.5h1M124 444.5h1M476 444.5h1M482 444.5h1M116 445.5h1M123 445.5h1M202 445.5h1M401 445.5h1M477 445.5h1M483 445.5h2M115 446.5h1M121 446.5h2M472 446.5h1M478 446.5h2M485 446.5h1M120 447.5h1M126 447.5h1M201 447.5h1M402 447.5h1M473 447.5h1M480 447.5h1M119 448.5h1M125 448.5h1M131 448.5h1M474 448.5h1M481 448.5h1M118 449.5h1M123 449.5h2M130 449.5h1M199 449.5h1M404 449.5h1M470 449.5h1M475 449.5h2M122 450.5h1M129 450.5h1M471 450.5h1M477 450.5h1M121 451.5h1M128 451.5h1M198 451.5h1M472 451.5h1M478 451.5h1M120 452.5h1M126 452.5h2M467 452.5h1M473 452.5h2M125 453.5h1M132 453.5h1M197 453.5h1M468 453.5h1M475 453.5h1M124 454.5h1M131 454.5h1M469 454.5h1M476 454.5h1M123 455.5h1M129 455.5h2M195 455.5h1M408 455.5h1M470 455.5h1M122 456.5h1M128 456.5h1M134 456.5h1M471 456.5h1M121 457.5h1M127 457.5h1M133 457.5h1M194 457.5h1M409 457.5h1M472 457.5h1M126 458.5h1M132 458.5h1M462 458.5h1M473 458.5h1M131 459.5h1M137 459.5h1M193 459.5h1M463 459.5h1M130 460.5h1M136 460.5h1M464 460.5h1M129 461.5h1M135 461.5h1M459 461.5h1M465.5 461v2M134 462.5h1M140 462.5h1M460 462.5h1M133 463.5h1M139 463.5h1M461 463.5h1M466 463.5h1M132 464.5h1M137 464.5h2M456 464.5h1M462 464.5h1M467 464.5h1M136 465.5h1M457 465.5h1M463 465.5h1M135 466.5h1M453 466.5h1M458 466.5h1M464 466.5h1M134 467.5h1M146 467.5h1M448 467.5h1M454 467.5h1M459 467.5h1M145 468.5h1M449 468.5h1M455 468.5h1M460 468.5h1M144 469.5h1M450 469.5h1M456.5 469v2M461 469.5h1M143 470.5h1M149 470.5h1M451 470.5h1M142 471.5h1M148 471.5h1M452 471.5h1M457 471.5h1M141 472.5h1M147 472.5h1M152 472.5h1M447 472.5h1M453.5 472v2M458 472.5h1M140 473.5h1M146.5 473v2M151 473.5h1M448 473.5h1M150 474.5h1M444 474.5h1M449 474.5h1M454 474.5h1M145 475.5h1M149.5 475v2M155 475.5h1M160 475.5h1M445 475.5h1M450.5 475v2M455 475.5h1M144 476.5h1M154 476.5h1M159 476.5h1M446 476.5h1M456 476.5h1M148 477.5h1M153 477.5h1M158.5 477v2M441 477.5h1M447.5 477v2M451 477.5h1M457 477.5h1M147 478.5h1M152.5 478v2M442 478.5h1M452 478.5h1M157 479.5h1M438 479.5h1M443 479.5h1M448 479.5h1M151 480.5h1M156 480.5h1M161 480.5h1M439 480.5h1M444.5 480v2M449 480.5h1M150 481.5h1M155 481.5h1M160 481.5h1M440 481.5h1M154 482.5h1M159 482.5h1M164 482.5h1M441.5 482v2M445 482.5h1M153.5 483v2M158.5 483v2M163.5 483v2M446 483.5h1M432 484.5h1M442 484.5h1M152 485.5h1M157 485.5h1M162.5 485v2M167 485.5h1M433.5 485v2M443 485.5h1M156 486.5h1M166.5 486v2M428 486.5h1M161.5 487v2M171 487.5h1M429.5 487v2M434 487.5h1M165 488.5h1M170 488.5h1M435.5 488v2M160 489.5h1M164.5 489v2M169 489.5h1M425 489.5h1M430 489.5h1M168.5 490v2M417 490.5h1M426.5 490v2M431 490.5h1M436 490.5h1M163 491.5h1M177 491.5h1M418.5 491v2M422 491.5h1M432.5 491v2M167 492.5h1M176.5 492v2M423.5 492v2M427 492.5h1M166 493.5h1M181 493.5h1M419.5 493v2M428.5 493v2M433 493.5h1M175.5 494v2M180.5 494v2M424 494.5h1M184 495.5h1M415 495.5h1M420 495.5h1M425.5 495v2M429 495.5h1M174.5 496v2M179.5 496v2M183.5 496v2M416.5 496v2M421.5 496v2M188 497.5h1M192 497.5h1M411 497.5h1M426 497.5h1M173 498.5h1M178.5 498v2M182.5 498v2M187.5 498v2M191.5 498v2M412.5 498v2M417.5 498v2M422.5 498v2M408 499.5h1M177 500.5h1M181.5 500v2M186.5 500v2M190.5 500v2M409.5 500v2M413.5 500v2M418.5 500v2M423.5 500v2M195 501.5h1M404 501.5h1M180 502.5h1M185.5 502v2M189.5 502v2M194.5 502v2M405.5 502v2M410.5 502v2M414.5 502v2M419 502.5h1M198.5 503v2M184 504.5h1M188.5 504v2M193.5 504v2M397 504.5h1M406.5 504v2M411.5 504v2M415 504.5h1M197.5 505v2M202 505.5h1M398.5 505v2M187.5 506v2M192.5 506v2M201.5 506v2M205.5 506v2M394.5 506v2M407.5 506v2M412 506.5h1M196.5 507v2M399.5 507v2M186 508.5h1M191 508.5h1M200.5 508v2M204.5 508v2M382.5 508v2M390.5 508v2M395.5 508v2M408 508.5h1M195.5 509v2M386.5 509v2M400.5 509v2M199.5 510v2M203.5 510v2M213.5 510v2M383.5 510v2M391.5 510v2M396.5 510v2M216.5 511v2M387.5 511v2M401 511.5h1M198 512.5h1M202.5 512v2M212.5 512v2M379.5 512v2M384.5 512v3M392.5 512v2M397.5 512v2M215.5 513v4M220.5 513v2M229 513.5h1M388.5 513v2M211.5 514v2M224.5 514v2M228.5 514v2M375.5 514v2M380.5 514v2M393.5 514v2M219.5 515v2M371.5 515v2M385.5 515v3M389.5 515v2M210.5 516v2M223.5 516v2M227.5 516v3M231.5 516v2M368.5 516v2M376.5 516v2M381.5 516v2M214.5 517v2M218.5 517v2M372.5 517v2M222.5 518v2M230.5 518v4M235.5 518v2M360.5 518v2M369.5 518v4M377.5 518v2M382.5 518v2M386.5 518v2M217.5 519v2M226.5 519v3M239.5 519v2M344.5 519v3M356.5 519v2M373.5 519v2M221.5 520v2M234.5 520v4M243.5 520v2M352.5 520v2M361.5 520v4M378.5 520v2M387 520.5h1M238.5 521v4M348.5 521v2M357.5 521v4M374.5 521v2M225.5 522v2M229.5 522v3M242.5 522v4M251.5 522v2M255.5 522v2M267.5 522v3M345.5 522v4M353.5 522v4M370.5 522v2M258.5 523v4M341.5 523v4M349.5 523v4M224.5 524v2M233.5 524v2M250.5 524v4M254.5 524v4M262.5 524v4M305.5 524v14M333.5 524v4M337.5 524v4M362.5 524v3M237.5 525v2M266.5 525v7M270.5 525v4M274.5 525v4M329.5 525v4M358.5 525v3M241.5 526v2M278.5 526v4M282.5 526v9M313.5 526v9M317.5 526v4M321.5 526v4M346.5 526v5M354.5 526v3M257.5 527v5M290.5 527v8M294.5 527v8M298.5 527v8M301.5 527v8M309.5 527v8M342.5 527v4M350.5 527v3M249.5 528v2M253.5 528v3M261.5 528v4M334.5 528v5M338.5 528v4M269.5 529v5M273.5 529v5M330.5 529v4M277.5 530v4M318.5 530v5M322.5 530v4M347.5 531v2M265.5 532v3"/>
<path stroke="#ff0000" d="M123 95.5h5M121 96.5h2M128 96.5h2M120.5 97v2M130.5 97v2M747 98.5h3M119.5 99v5M131.5 99v5M746.5 99v3M750.5 99v3M744 101.5h2M747 101.5h1M749 101.5h1M751 101.5h2M744 103.5h9M120.5 104v2M130 104.5h1M129.5 105v3M121.5 106v3M117.5 107v2M130 108.5h1M118 109.5h3M131 109.5h1M132 110.5h1M133 111.5h1M746.5 136v2M749.5 136v2M752 136.5h1M745.5 137v2M748.5 137v2M751.5 137v2M747.5 138v2M750.5 138v2M744 139.5h1M746.5 141v2M749.5 141v2M752 141.5h1M745.5 142v2M748.5 142v2M751.5 142v2M747.5 143v2M750.5 143v2M744 144.5h1M428 163.5h6M432 164.5h2M431 165.5h1M433.5 165v4M430 166.5h1M429 167.5h1M428 168.5h1M420 169.5h5M427 169.5h1M419 170.5h1M425 170.5h2M418 171.5h1M426 171.5h1M417.5 172v5M427.5 172v5M745 176.5h1M751 176.5h1M418 177.5h1M426 177.5h1M746 177.5h1M750 177.5h1M419 178.5h1M425 178.5h1M747 178.5h3M420 179.5h5M746 179.5h1M750 179.5h1M745.5 180v3M751.5 180v3M746 183.5h1M750 183.5h1M747 184.5h3M405 193.5h1M400.5 197v4M400.5 202v5M400 208.5h2M410.5 208v6M399 209.5h1M400 210.5h1M401 211.5h1M399 212.5h2M400 214.5h2M409.5 214v10M399 215.5h1M400 216.5h1M401 217.5h1M399 218.5h2M418.5 219v3M400 220.5h2M399 221.5h1M400 222.5h1M417.5 222v6M401 223.5h1M399 224.5h2M400 226.5h2M747 226.5h3M399 227.5h1M408.5 227v7M416.5 227v5M745 227.5h2M750 227.5h2M400 228.5h1M745 228.5h1M751 228.5h1M401 229.5h1M744.5 229v3M752.5 229v3M398 230.5h1M400 230.5h1M748 230.5h1M399 232.5h1M402 232.5h1M415.5 232v5M745.5 232v2M751.5 232v2M398 233.5h1M416 233.5h1M746 233.5h1M750 233.5h1M399 234.5h1M407.5 234v10M747 234.5h3M402 235.5h1M398 236.5h2M416 236.5h1M414.5 237v4M399 238.5h1M402 238.5h1M398 239.5h1M415 239.5h1M550 239.5h3M560 239.5h3M399 240.5h1M549 240.5h1M553 240.5h1M559 240.5h1M563 240.5h1M402 241.5h1M413.5 241v5M548.5 241v3M554.5 241v3M558.5 241v3M564.5 241v3M398 242.5h2M415 242.5h1M399 244.5h1M402 244.5h1M406.5 244v10M549 244.5h1M555.5 244v4M557.5 244v4M563 244.5h1M398 245.5h1M414 245.5h1M550 245.5h1M562 245.5h1M399 246.5h1M412.5 246v5M402 247.5h1M398 248.5h2M414 248.5h1M556.5 248v8M399 250.5h1M402 250.5h1M397 251.5h1M411.5 251v5M413 251.5h1M399 252.5h1M403 253.5h1M397 254.5h1M399 254.5h1M405.5 254v10M413 254.5h1M399 256.5h1M403 256.5h1M410.5 256v5M397 257.5h1M412 257.5h1M399 258.5h1M403 259.5h1M397 260.5h1M399 260.5h1M412 260.5h1M409.5 261v5M399 262.5h1M403 262.5h1M397 263.5h1M412 263.5h1M399 264.5h1M404.5 264v11M403 265.5h1M397 266.5h1M399 266.5h1M408.5 266v5M411 266.5h1M750 266.5h3M751 267.5h2M399 268.5h1M403 268.5h1M750 268.5h1M752 268.5h1M397 269.5h1M411 269.5h1M746 269.5h2M749 269.5h1M399 270.5h1M745 270.5h1M748 270.5h1M403 271.5h1M407.5 271v5M744.5 271v2M749.5 271v2M396 272.5h1M399 272.5h1M410 272.5h1M745 273.5h1M748 273.5h1M399 274.5h1M403.5 274v10M746 274.5h2M396 275.5h1M410 275.5h1M399 276.5h1M406.5 276v4M751 276.5h1M404 277.5h1M745 277.5h2M750.5 277v8M396 278.5h1M399 278.5h1M409 278.5h1M747.5 278v2M399 280.5h1M404 280.5h2M746 280.5h1M396 281.5h1M405.5 281v4M409 281.5h1M745.5 281v3M399 282.5h1M404 283.5h1M746 283.5h4M751 283.5h2M396 284.5h1M399 284.5h1M402.5 284v10M408 284.5h1M404.5 285v5M399 286.5h1M396 287.5h1M408 287.5h1M399 288.5h1M396 290.5h1M399 290.5h1M403.5 290v5M408 290.5h1M399 292.5h1M404 292.5h1M395 293.5h1M407 293.5h1M399 294.5h1M401.5 294v11M402.5 295v5M405 295.5h1M395 296.5h1M399 296.5h1M407 296.5h1M399 298.5h1M405 298.5h1M395 299.5h1M406 299.5h1M399 300.5h1M405 301.5h1M395 302.5h1M398 302.5h1M406 302.5h1M398 304.5h1M400.5 304v11M405.5 304v2M395 305.5h1M398 306.5h1M405.5 307v2M395 308.5h1M398 308.5h1M398 310.5h2M405.5 310v2M395 311.5h1M399.5 311v14M398 312.5h1M405 313.5h1M395 314.5h1M398.5 314v5M404 314.5h1M406 316.5h1M394 317.5h1M404 317.5h1M397.5 319v5M406 319.5h1M394 320.5h1M398 320.5h1M403 320.5h1M398 322.5h1M406 322.5h1M394 323.5h1M403 323.5h1M396.5 324v5M398.5 324v11M406 325.5h1M394 326.5h1M402 326.5h1M406 328.5h1M394 329.5h2M402 329.5h1M395.5 330v4M406 331.5h1M394 332.5h1M401 332.5h1M394.5 334v5M406 334.5h1M397.5 335v10M401 335.5h1M398 336.5h1M406 337.5h1M393.5 338v7M398 338.5h1M401 338.5h1M398 340.5h1M407 340.5h1M400 341.5h1M398 342.5h1M407 343.5h1M392.5 344v5M398 344.5h1M400 344.5h1M396.5 345v10M398 346.5h1M407 346.5h1M393 347.5h1M399 347.5h1M398 348.5h1M391.5 349v5M407 349.5h1M393 350.5h1M398 350.5h2M398.5 352v3M407 352.5h1M393 353.5h1M390.5 354v5M395.5 355v10M407 355.5h1M393 356.5h1M398 356.5h1M398 358.5h1M407 358.5h1M389.5 359v4M392 359.5h1M397 359.5h1M398 360.5h1M408 361.5h1M392 362.5h1M397 362.5h2M388.5 363v5M398 364.5h1M408 364.5h1M392 365.5h1M394.5 365v10M397 365.5h1M398 366.5h1M408 367.5h1M387.5 368v5M392 368.5h1M396 368.5h1M398 368.5h1M397 370.5h1M408 370.5h1M392 371.5h1M396 371.5h1M397 372.5h1M386.5 373v5M408 373.5h1M392 374.5h1M395 374.5h1M397 374.5h1M393.5 375v10M397 376.5h1M408 376.5h1M392 377.5h1M395 377.5h1M385.5 378v5M397 378.5h1M408 379.5h1M391 380.5h1M394 380.5h1M397 380.5h1M397 382.5h1M409 382.5h1M384.5 383v5M391 383.5h1M394 383.5h1M397 384.5h1M450 384.5h5M392.5 385v2M409 385.5h1M448 385.5h2M455 385.5h2M391 386.5h1M394 386.5h1M397 386.5h1M447 386.5h1M457 386.5h1M446 387.5h1M458 387.5h1M383.5 388v5M392.5 388v8M397 388.5h1M409 388.5h1M445.5 388v2M459.5 388v2M391 389.5h1M393 389.5h1M397 390.5h1M444.5 390v5M460.5 390v5M391 392.5h1M393 392.5h1M397 392.5h1M452 392.5h1M382.5 393v5M397 394.5h1M391.5 395v10M413 395.5h1M445.5 395v2M459.5 395v2M397 396.5h1M446 397.5h1M458 397.5h1M381.5 398v4M392 398.5h1M397 398.5h1M447 398.5h1M457 398.5h1M448 399.5h2M455 399.5h2M397 400.5h1M450 400.5h5M390 401.5h1M380.5 402v5M397 402.5h1M390.5 404v7M379.5 407v5M378.5 412v5M393 415.5h1M377.5 417v3M407 439.5h1M406 440.5h1M396 441.5h2M405.5 441v15M398 442.5h1M399.5 443v2M398.5 445v2M397.5 447v2M396.5 449v2M395.5 451v3M396 453.5h9M406 453.5h4M221 540.5h5M224 541.5h2M223 542.5h1M225.5 542v3M222 543.5h1M221 544.5h1M220 545.5h1M211 546.5h1M219 546.5h1M212 547.5h1M218 547.5h1M213 548.5h1M217 548.5h1M214 549.5h1M216 549.5h1M215 550.5h1M214 551.5h1M216 551.5h1M213 552.5h1M217 552.5h1M212 553.5h1M218 553.5h1M211 554.5h1M219 554.5h1M210 555.5h1M209 556.5h1"/>
<path stroke="#00ff00" d="M374 42.5h1M388 42.5h1M375 43.5h2M386 43.5h2M377 44.5h9M378.5 45v12M384.5 45v12M377 56.5h1M379 56.5h5M385 56.5h1M375 57.5h2M386 57.5h2M374 58.5h1M388 58.5h1M744 116.5h1M746 116.5h1M748 116.5h1M745.5 117v7M747.5 117v7M749.5 117v7M752.5 122v2M750 124.5h2M745 156.5h2M750 156.5h2M744.5 157v2M747.5 157v3M749.5 157v3M752.5 157v2M745 159.5h1M751 159.5h1M748.5 160v5M340.5 161v3M341.5 164v4M342.5 168v4M343.5 172v4M344.5 176v5M345.5 181v4M346.5 185v4M347.5 189v4M443 192.5h1M455 192.5h1M348.5 193v5M444 193.5h1M454 193.5h1M445.5 194v7M453.5 194v7M449.5 196v9M747 196.5h3M746 197.5h1M750 197.5h1M349.5 198v4M446 198.5h3M450 198.5h3M745.5 198v3M751.5 198v3M444 201.5h1M454 201.5h1M746.5 201v2M750.5 201v2M350.5 202v4M443 202.5h1M455 202.5h1M744 202.5h1M745 203.5h1M751 203.5h1M448 204.5h1M450 204.5h1M752 204.5h1M447.5 205v3M451.5 205v3M351.5 206v5M448 208.5h3M352.5 211v4M353.5 215v4M423 216.5h1M354.5 219v4M355.5 223v5M356.5 228v4M357.5 232v4M358.5 236v4M359.5 240v5M360.5 245v4M746 246.5h1M750 246.5h1M747 247.5h3M746.5 248v3M750.5 248v3M361.5 249v4M747 251.5h3M748.5 252v3M362.5 253v4M746 253.5h2M749 253.5h2M747 256.5h3M363.5 257v5M746.5 257v3M750.5 257v3M747 260.5h3M748.5 261v4M364.5 262v4M746 262.5h2M749 262.5h2M365.5 266v4M366.5 270v4M367.5 274v5M368.5 279v4M369.5 283v4M370.5 287v5M371.5 292v4M372.5 296v4M745 296.5h1M751 296.5h1M746.5 297v4M750.5 297v4M748.5 298v5M747 299.5h1M749 299.5h1M373.5 300v4M745 301.5h1M751 301.5h1M747.5 302v3M749.5 302v3M374.5 304v5M748 304.5h1M375.5 309v4M376.5 313v4M377.5 317v4M378.5 321v5M379.5 326v4M380.5 330v4M381.5 334v4M382.5 338v5M383.5 343v4M40 347.5h5M384.5 347v4M39 348.5h1M45 348.5h1M38.5 349v3M46.5 349v3M385.5 351v4M39.5 352v2M45.5 352v2M34 353.5h5M40 353.5h1M44 353.5h1M46 353.5h5M386.5 355v5M34 357.5h17M387.5 360v4M389.5 368v5M390.5 373v4M391.5 377v3M392.5 381v4M393.5 385v4M394.5 390v4M395.5 394v4M396.5 398v4M397 403.5h1M401 409.5h1M426 414.5h1M434 414.5h1M394 415.5h1M427 415.5h1M433 415.5h1M428 416.5h5M427 417.5h1M433 417.5h1M426.5 418v5M434.5 418v5M427 423.5h1M433 423.5h1M428 424.5h5M430.5 425v6M414 427.5h5M413 428.5h1M419 428.5h1M426 428.5h4M431 428.5h4M412.5 429v5M420.5 429v5M413 434.5h1M419 434.5h1M414 435.5h5M416.5 436v8M412 439.5h4M417 439.5h4M469.5 487v2M475.5 487v2M481 487.5h1M468.5 488v2M474.5 488v2M480.5 488v2M470.5 489v3M476.5 489v3M467 490.5h1M473 490.5h1M479 490.5h1M466.5 491v2M472.5 491v2M478.5 491v2M471.5 492v2M477.5 492v2M465 493.5h1M469.5 497v2M475.5 497v2M481 497.5h1M468.5 498v2M474.5 498v2M480.5 498v2M470.5 499v3M476.5 499v3M467 500.5h1M473 500.5h1M479 500.5h1M466.5 501v2M472.5 501v2M478.5 501v2M471.5 502v2M477.5 502v2M465 503.5h1"/>
<path stroke="#ffff00" d="M747 108.5h3M746.5 109v3M750.5 109v3M744 111.5h2M747 111.5h1M749 111.5h1M751 111.5h2M744 113.5h9M489 117.5h1M501 117.5h1M490.5 118v2M500.5 118v2M491 120.5h2M498 120.5h2M493 121.5h5M491 122.5h2M498 122.5h2M490.5 123v2M500.5 123v2M489.5 125v5M501.5 125v5M490.5 130v2M500.5 130v2M491 132.5h2M498 132.5h2M493 133.5h5M744 146.5h1M752 146.5h1M745 147.5h1M751 147.5h1M746.5 148v5M750.5 148v5M744 150.5h2M747 150.5h3M751 150.5h2M745 153.5h1M751 153.5h1M744 154.5h1M752 154.5h1M747 187.5h3M745 188.5h2M750 188.5h2M744.5 189v2M747.5 189v2M752 189.5h1M750 190.5h2M745 191.5h2M749.5 191v2M752.5 191v2M744 192.5h1M745 193.5h2M750 193.5h2M747 194.5h3M42 209.5h1M46 209.5h1M50 209.5h1M43 210.5h1M45 210.5h1M47 210.5h1M49 210.5h1M51 210.5h1M44.5 211v13M48.5 211v13M52.5 211v10M56.5 211v10M55 212.5h1M54 213.5h1M53 214.5h1M53 221.5h1M55 221.5h1M54 222.5h1M53 223.5h1M55 223.5h1M52.5 224v2M56.5 224v2M747.5 286v8M745 287.5h2M748 287.5h2M749 289.5h2M748 290.5h1M751.5 290v2M750.5 292v2M751 294.5h1M409 391.5h1M405 395.5h1M402 399.5h1M398 403.5h1M397 404.5h1M395 406.5h1M393 407.5h1M391 409.5h1M386 413.5h1M382 416.5h1M378 418.5h1M381 424.5h1M382.5 449v15M378 451.5h4M383 451.5h4M386 455.5h3M385 456.5h1M389 456.5h1M384 457.5h1M390.5 457v3M383 458.5h1M389 460.5h1M388.5 461v2M389 463.5h1M390.5 464v2M345.5 548v5M351.5 548v2M355 548.5h3M344 549.5h1M352 549.5h1M354 549.5h1M358 549.5h1M343 550.5h1M350.5 550v2M353.5 550v3M359.5 550v3M349.5 552v2M346.5 553v5M354 553.5h1M358 553.5h1M348.5 554v2M355 554.5h3M357 555.5h1M347.5 556v7M358 556.5h1M359.5 557v6M358 563.5h1M357 564.5h1"/>
<path stroke="#0000ff" d="M245 35.5h5M244 36.5h1M250 36.5h3M241 37.5h3M253 37.5h1M240 38.5h1M244 38.5h1M254 38.5h1M239.5 39v3M245.5 39v3M255 39.5h1M251 41.5h3M240 42.5h1M244 42.5h1M250 42.5h1M254 42.5h1M241 43.5h3M249.5 43v3M255.5 43v3M239 45.5h1M240 46.5h1M250 46.5h1M254 46.5h1M241 47.5h1M251 47.5h3M242 48.5h3M250 48.5h1M245 49.5h5M745.5 126v4M748.5 126v2M750 126.5h2M744 127.5h1M749.5 127v2M752.5 127v2M747.5 128v2M750 129.5h2M746.5 130v4M751 130.5h1M752.5 131v3M751 134.5h1M745 166.5h2M750 166.5h2M744.5 167v2M747.5 167v3M749.5 167v3M752.5 167v2M745 169.5h1M751 169.5h1M748.5 170v5M744 206.5h1M746 206.5h1M748 206.5h1M745.5 207v7M747.5 207v7M749.5 207v5M751.5 207v5M750 208.5h1M750 212.5h1M749.5 213v2M751.5 213v2M746 236.5h3M745 237.5h1M749 237.5h2M746 238.5h1M751.5 238v5M747.5 239v3M746 242.5h1M745 243.5h1M749 243.5h2M746 244.5h3M745.5 306v3M748.5 306v9M751.5 306v3M744 307.5h1M746 307.5h2M749 307.5h2M752 307.5h1M746 309.5h1M750 309.5h1M747 310.5h1M749 310.5h1M746 312.5h2M749 312.5h2M745.5 316v3M748 316.5h1M751.5 316v3M747 317.5h1M749 317.5h1M748 318.5h1M746 319.5h1M750 319.5h1M747 320.5h3M748.5 321v4M746 322.5h2M749 322.5h2M468.5 333v5M474.5 333v17M480.5 333v5M444 334.5h1M473 334.5h1M475 334.5h1M467 335.5h1M469 335.5h1M472 335.5h1M476 335.5h1M479 335.5h1M481 335.5h1M469 338.5h1M479 338.5h1M470 339.5h1M478 339.5h1M471 340.5h1M477 340.5h1M472 341.5h2M475 341.5h2M470 345.5h4M475 345.5h4M540 373.5h1M556 373.5h1M541 374.5h1M555 374.5h1M542 375.5h1M554 375.5h1M543.5 376v2M553.5 376v2M544.5 378v7M552.5 378v7M540 381.5h4M545 381.5h7M553 381.5h4M543.5 385v2M553.5 385v2M542 387.5h1M554 387.5h1M541 388.5h1M555 388.5h1M540 389.5h1M556 389.5h1M438 400.5h5M437 401.5h1M443 401.5h2M436 402.5h1M445 402.5h1M437 403.5h1M446 403.5h1M438 404.5h1M447 404.5h1M439.5 405v2M448.5 405v7M440.5 407v3M439.5 410v2M438 412.5h1M447 412.5h1M437 413.5h1M446 413.5h1M436 414.5h1M445 414.5h1M437 415.5h1M443 415.5h2M438 416.5h5M355 438.5h1M361.5 457v6M366 457.5h3M373.5 457v6M365.5 458v3M369.5 458v3M366 461.5h3M362 463.5h1M371 463.5h2M363 464.5h2M370 464.5h1M95 465.5h1M99 465.5h1M103 465.5h1M365 465.5h5M96 466.5h1M98 466.5h1M100 466.5h1M102 466.5h1M104 466.5h1M367.5 466v8M97.5 467v13M101.5 467v13M105.5 467v13M363 469.5h4M368 469.5h4M110.5 476v4M109 477.5h1M111 477.5h1M106 480.5h1M109 480.5h1M107 481.5h2"/>
<path stroke="#00ffff" d="M401.5 199v4M402.5 203v3M403.5 206v4M404.5 210v3M405.5 213v4M406.5 217v3M407.5 220v4M408.5 224v3M409.5 227v4M410.5 231v3M411.5 234v4M412.5 238v3M414.5 246v2M415.5 248v4M416.5 252v3M417.5 255v4M418.5 259v3M419.5 262v3M420.5 265v4M421.5 269v3M422.5 272v4M423.5 276v3M424.5 279v4M425.5 283v3M426.5 286v4M427.5 290v3M428.5 293v4M429.5 297v3M430.5 300v4M431.5 304v3M432.5 307v4M433.5 311v3M434.5 314v4M435.5 318v3M436.5 321v4M437.5 325v3M438.5 328v4M439.5 332v2M436 336.5h1M434 339.5h1M431 342.5h1M429 345.5h1M426 348.5h1M423 351.5h1M421 354.5h1M418 357.5h1M416 360.5h1M413 363.5h1M410 366.5h1M408 369.5h1M405 372.5h1M403 375.5h1M400 378.5h1M397 381.5h1M395 384.5h1M392 387.5h1M389 390.5h1M387 393.5h1M384 396.5h1M382 399.5h1M379 402.5h1M376 405.5h1M374 408.5h1M371 411.5h1M369 414.5h1M366 417.5h1M363 420.5h1M361 423.5h1M358 426.5h1M356 429.5h1M353 432.5h1"/>
<path stroke="#008080" d="M348 119.5h5M347 120.5h1M353 120.5h1M346 121.5h1M354 121.5h1M345 122.5h1M355 122.5h1M344.5 123v5M356.5 123v5M345 128.5h1M355 128.5h1M346.5 129v6M354.5 129v6M343 131.5h3M355 131.5h3M342.5 132v3M358.5 132v3M343 135.5h3M355 135.5h3M342 156.5h1M446 177.5h1M445 178.5h1M435 179.5h7M444 179.5h1M434 180.5h1M442 180.5h2M433 181.5h1M442 181.5h2M432.5 182v7M441 182.5h1M444.5 182v7M440 183.5h1M439 184.5h1M438 185.5h1M437 186.5h1M436 187.5h1M435 188.5h1M433 189.5h2M443 189.5h1M433 190.5h2M442 190.5h1M432 191.5h1M435 191.5h7M431 192.5h1M430 193.5h1M415 204.5h1M747 326.5h3M746 327.5h1M750 327.5h1M745.5 328v3M751.5 328v3M746.5 331v3M750.5 331v3M745 332.5h1M751 332.5h1M744 333.5h1M752 333.5h1M745 334.5h1M751 334.5h1M752 336.5h1M747 337.5h3M751 337.5h1M746 338.5h1M750 338.5h1M745.5 339v3M749 339.5h1M751.5 339v3M748 340.5h1M747 341.5h1M746 342.5h1M750 342.5h1M745 343.5h1M747 343.5h3M744 344.5h1"/>
<text transform="translate(95.9 350) scale(0.82 1)" fill="#ff0000">1</text>
<text transform="translate(142.9 441) scale(0.82 1)" fill="#ffff00">2</text>
<text transform="translate(241.9 505) scale(0.82 1)" fill="#00ff00">3</text>
<text transform="translate(364.9 504) scale(0.82 1)" fill="#0000ff">4</text>
<text transform="translate(460.9 439) scale(0.82 1)" fill="#ff0000">5</text>
<text transform="translate(505.9 349) scale(0.82 1)" fill="#ffff00">6</text>
<text transform="translate(505.9 258) scale(0.82 1)" fill="#00ff00">7</text>
<text transform="translate(458.9 167) scale(0.82 1)" fill="#0000ff">8</text>
<text transform="translate(359.9 103) scale(0.82 1)" fill="#ff0000">9</text>
<text transform="translate(236.9 104) scale(0.82 1)" fill="#ffff00">10</text>
<text transform="translate(140.9 169) scale(0.82 1)" fill="#00ff00">11</text>
<text transform="translate(95.9 259) scale(0.82 1)" fill="#0000ff">12</text>
</svg>
<div id="side">
<div class="l"><span style="color:#ffffff">Astrolog 6.50</span></div>
<div class="l"><span style="color:#c0c0c0">Current moment now</span></div>
<div class="l"><span style="color:#c0c0c0">Thu February 11, 2021</span></div>
<div class="l"><span style="color:#c0c0c0"> 9:05pm (ST 2:00E UTC)</span></div>
<div class="l"><span style="color:#c0c0c0"> 26°06E 44°26N</span></div>
<div class="l"><span style="color:#c0c0c0">Placidus houses</span></div>
<div class="l"><span style="color:#c0c0c0">Tropical, Geocentric</span></div>
<div class="l"><span style="color:#c0c0c0">Julian Day: 2459257.29514</span></div>
<div class="l">&nbsp;</div>
<div class="l"><span style="color:#ff0000"> 1st house: </span><span style="color:#00ff00"> 3Lib22</span></div>
<div class="l"><span style="color:#ffff00"> 2nd house: </span><span style="color:#00ff00">29Lib02</span></div>
<div class="l"><span style="color:#00ff00"> 3rd house: </span><span style="color:#0000ff">29Sco36</span></div>
<div class="l"><span style="color:#0000ff"> 4th house: </span><span style="color:#ffff00"> 4Cap02</span></div>
<div class="l"><span style="color:#ff0000"> 5th house: </span><span style="color:#00ff00"> 8Aqu15</span></div>
<div class="l"><span style="color:#ffff00"> 6th house: </span><span style="color:#0000ff"> 8Pis20</span></div>
<div class="l"><span style="color:#00ff00"> 7th house: </span><span style="color:#ff0000"> 3Ari22</span></div>
<div class="l"><span style="color:#0000ff"> 8th house: </span><span style="color:#ff0000">29Ari02</span></div>
<div class="l"><span style="color:#ff0000"> 9th house: </span><span style="color:#ffff00">29Tau36</span></div>
<div class="l"><span style="color:#ffff00">10th house: </span><span style="color:#0000ff"> 4Can02</span></div>
<div class="l"><span style="color:#00ff00">11th house: </span><span style="color:#ff0000"> 8Leo15</span></div>
<div class="l"><span style="color:#0000ff">12th house: </span><span style="color:#ffff00"> 8Vir20</span></div>
<div class="l">&nbsp;</div>
<div class="l"><span style="color:#ff0000">Sun : </span><span style="color:#00ff00">23Aqu16</span><span style="color:#ffffff"> </span><span style="color:#c0c0c0"> - 0°00'</span></div>
<div class="l"><span style="color:#0000ff">Moon: </span><span style="color:#00ff00">23Aqu16</span><span style="color:#ffffff"> </span><span style="color:#c0c0c0"> - 4°35'</span></div>
<div class="l"><span style="color:#00ff00">Merc: </span><span style="color:#00ff00">16Aqu16</span><span style="color:#ffffff">R</span><span style="color:#c0c0c0"> + 3°39'</span></div>
<div class="l"><span style="color:#00ff00">Venu: </span><span style="color:#00ff00">12Aqu47</span><span style="color:#ffffff"> </span><span style="color:#c0c0c0"> - 0°58'</span></div>
<div class="l"><span style="color:#ff0000">Mars: </span><span style="color:#ffff00">18Tau25</span><span style="color:#ffffff"> </span><span style="color:#c0c0c0"> + 1°21'</span></div>
<div class="l"><span style="color:#ff0000">Jupi: </span><span style="color:#00ff00">12Aqu36</span><span style="color:#ffffff"> </span><span style="color:#c0c0c0"> - 0°32'</span></div>
<div class="l"><span style="color:#ffff00">Satu: </span><span style="color:#00ff00"> 6Aqu32</span><span style="color:#ffffff"> </span><span style="color:#c0c0c0"> - 0°26'</span></div>
<div class="l"><span style="color:#00ff00">Uran: </span><span style="color:#ffff00"> 7Tau04</span><span style="color:#ffffff"> </span><span style="color:#c0c0c0"> - 0°25'</span></div>
<div class="l"><span style="color:#0000ff">Nept: </span><span style="color:#0000ff">19Pis37</span><span style="color:#ffffff"> </span><span style="color:#c0c0c0"> - 1°04'</span></div>
<div class="l"><span style="color:#0000ff">Plut: </span><span style="color:#ffff00">25Cap32</span><span style="color:#ffffff"> </span><span style="color:#c0c0c0"> - 1°15'</span></div>
<div class="l"><span style="color:#008080">Nort: </span><span style="color:#00ff00">16Gem38</span><span style="color:#ffffff">R</span><span style="color:#c0c0c0"> + 0°00'</span></div>
<div class="l"><span style="color:#008080">Lili: </span><span style="color:#ffff00">12Tau37</span><span style="color:#ffffff"> </span><span style="color:#c0c0c0"> - 2°53'</span></div>
<div class="l">&nbsp;</div>
<div class="l"><span style="color:#ff0000">Fire: 0, </span><span style="color:#ffff00">Earth: 4,</span></div>
<div class="l"><span style="color:#00ff00">Air : 7, </span><span style="color:#0000ff">Water: 1</span></div>
<div class="l"><span style="color:#ff0000">Car: 1, </span><span style="color:#ffff00">Fix: 9, </span><span style="color:#0000ff">Mut: 2</span></div>
<div class="l"><span style="color:#c0c0c0">Yang: 7, Yin: 5</span></div>
<div class="l"><span style="color:#ffff00">M: 4, </span><span style="color:#0000ff">N: 8, </span><span style="color:#ff0000">A: 0, </span><span style="color:#00ff00">D: 12</span></div>
<div class="l"><span style="color:#ff0000">Ang: 2, </span><span style="color:#ffff00">Suc: 8, </span><span style="color:#0000ff">Cad: 2</span></div>
<div class="l"><span style="color:#c0c0c0">Learn: 4, Share: 8</span></div>
</div>
<div id="frame"></div>
</body></html>
